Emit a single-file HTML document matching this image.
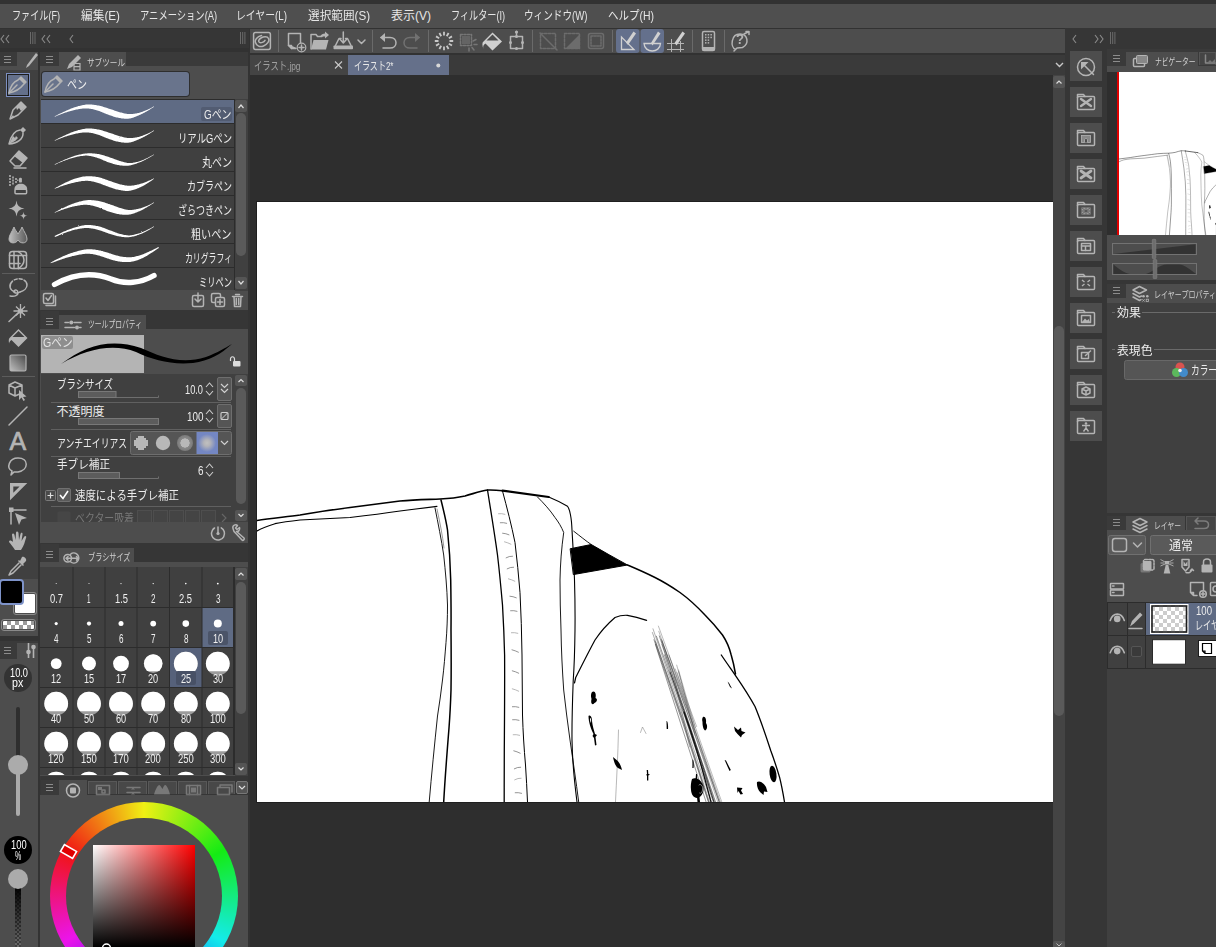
<!DOCTYPE html>
<html lang="ja"><head><meta charset="utf-8"><title>CLIP STUDIO PAINT</title>
<style>
html,body{margin:0;padding:0;background:#363636;}
body{width:1216px;height:947px;position:relative;overflow:hidden;font-family:"Liberation Sans","Noto Sans CJK JP",sans-serif;font-size:12px;color:#e2e2e2;}
.a{position:absolute;}
.t{position:absolute;white-space:nowrap;line-height:14px;transform-origin:0 0;}
svg{position:absolute;overflow:visible;}
.ic{stroke:#b4b4b4;fill:none;stroke-width:1.5;stroke-linecap:round;stroke-linejoin:round;}
.if{fill:#b4b4b4;stroke:none;}
.menu{top:9px;font-size:12px;color:#e6e6e6;}
.tab{background:#4d4d4d;}
.hd{background:#3a3a3a;}
.row{left:41px;width:193px;height:23px;background:#404040;}
.rl{right:3px;top:6px;font-size:12.5px;color:#e8e8e8;}
.sb{background:#404040;}
.sbb{background:#555;border-radius:2px;}
.sbt{background:#5a5a5a;border-radius:5px;}
.cell{position:absolute;background:#404040;}
.cl{position:absolute;left:0;right:0;text-align:center;font-size:12.5px;color:#e8e8e8;line-height:14px;}
.rb{background:#4d4d4d;}
</style></head><body>
<!-- top strip + menu bar -->
<div class="a" style="left:0;top:0;width:1216px;height:4px;background:#323232"></div>
<div class="a" style="left:0;top:4px;width:1216px;height:24px;background:#4f4f4f"></div>
<span class="t" style="left:12px;top:9.300px;font-size:12px;color:#e6e6e6;transform:scaleX(0.758)">ファイル(F)</span>
<span class="t" style="left:81px;top:9.300px;font-size:12px;color:#e6e6e6;transform:scaleX(0.975)">編集(E)</span>
<span class="t" style="left:140px;top:9.300px;font-size:12px;color:#e6e6e6;transform:scaleX(0.774)">アニメーション(A)</span>
<span class="t" style="left:236px;top:9.300px;font-size:12px;color:#e6e6e6;transform:scaleX(0.818)">レイヤー(L)</span>
<span class="t" style="left:307.5px;top:9.300px;font-size:12px;color:#e6e6e6;transform:scaleX(0.969)">選択範囲(S)</span>
<span class="t" style="left:391px;top:9.300px;font-size:12px;color:#e6e6e6;transform:scaleX(1.000)">表示(V)</span>
<span class="t" style="left:451px;top:9.300px;font-size:12px;color:#e6e6e6;transform:scaleX(0.760)">フィルター(I)</span>
<span class="t" style="left:524.4px;top:9.300px;font-size:12px;color:#e6e6e6;transform:scaleX(0.800)">ウィンドウ(W)</span>
<span class="t" style="left:608px;top:9.300px;font-size:12px;color:#e6e6e6;transform:scaleX(0.873)">ヘルプ(H)</span>
<!-- left header bar -->
<div class="a" style="left:0;top:28px;width:1216px;height:27px;background:#323232"></div>
<div class="a" style="left:0;top:29px;width:249px;height:19px;background:#363636"></div>
<!-- command bar -->
<div class="a" style="left:250px;top:29px;width:815px;height:24px;background:#4d4d4d"></div>
<!-- doc tab row -->
<div class="a" style="left:250px;top:55px;width:815px;height:20px;background:#3a3a3a"></div>
<div class="a" style="left:250px;top:55px;width:98px;height:20px;background:#444"></div>
<div class="a" style="left:348px;top:55px;width:101px;height:20px;background:#65708a"></div>
<span class="t" style="left:253.500px;top:58.500px;font-size:11.500px;color:#a0a0a0;transform:scaleX(0.723)">イラスト.jpg</span>
<span class="t" style="left:354px;top:58.500px;font-size:11.500px;color:#e8e8e8;transform:scaleX(0.697)">イラスト2*</span>
<!-- canvas area -->
<div class="a" style="left:250px;top:75px;width:803px;height:872px;background:#2e2e2e"></div>
<div class="a" style="left:257px;top:202px;width:796px;height:600px;background:#fff;box-shadow:0 0 0 1px #1f1f1f"></div>
<!-- canvas vscroll -->
<div class="a sb" style="left:1053px;top:75px;width:12px;height:872px;background:#444"></div>
<div class="a sbb" style="left:1053px;top:76px;width:12px;height:12px;"></div>
<div class="a sbt" style="left:1054px;top:326px;width:10px;height:390px;"></div>
<div class="a sbb" style="left:1053px;top:941px;width:12px;height:8px;"></div>
<!-- left header bar glyphs -->
<svg style="left:0;top:28px" width="250" height="22">
 <g stroke="#8a8a8a" stroke-width="1.1" fill="none">
  <path d="M4 7 L1 11 L4 15 M9 7 L6 11 L9 15"/>
  <path d="M30.500 4 V16 M32.800 4 V16 M35 4 V16" stroke-width="0.800" stroke="#777"/>
  <path d="M45 7 L42 11 L45 15 M50 7 L47 11 L50 15"/>
  <path d="M73 7 L70 11 L73 15"/>
  <path d="M240.500 4 V16 M242.700 4 V16 M244.900 4 V16" stroke-width="0.800" stroke="#777"/>
 </g>
</svg>
<!-- tool column -->
<div class="a" style="left:0;top:52px;width:38px;height:895px;background:#404040"></div>
<div class="a" style="left:38px;top:52px;width:2px;height:895px;background:#333"></div>
<div class="a tab" style="left:40px;top:52px;width:1px;height:895px;"></div>
<div class="a" style="left:40px;top:52px;width:1px;height:14px;background:#3a3a3a"></div>
<div class="a" style="left:40px;top:310px;width:1px;height:19px;background:#383838"></div>
<div class="a" style="left:40px;top:543px;width:1px;height:19px;background:#383838"></div>
<div class="a" style="left:40px;top:776px;width:1px;height:19px;background:#383838"></div>
<div class="a hd" style="left:0;top:52px;width:17px;height:14px;"></div>
<div class="a tab" style="left:17px;top:52px;width:21px;height:14px;"></div>
<div class="a tab" style="left:0;top:66px;width:38px;height:4px;"></div>
<svg style="left:0;top:52px" width="38" height="20">
 <path d="M4 4.5H11M4 7.5H11M4 10.5H11" stroke="#8c8c8c" stroke-width="1"/>
 <path d="M36 1 L38 3 L29 14 L26 16 L27 13 Z" class="if"/>
</svg>
<!-- selected pen tool -->
<div class="a" style="left:6px;top:73px;width:24px;height:24px;background:#64708b;box-sizing:border-box;border:1px solid #7d8fc0;"></div>
<div class="a" style="left:7px;top:74px;width:22px;height:22px;box-sizing:border-box;border:1px solid #1c1c1c;"></div>
<svg style="left:0;top:70px" width="38" height="520">
 <!-- pen nib 85 -->
 <g transform="translate(18,15)">
  <path d="M3 -8 L8 -3 L5 0 C2 4 -4 7 -9 8 C-8 3 -5 -3 0 -5 Z" class="ic" stroke-width="1.3"/>
  <path d="M-9 8 L-1 0" class="ic" stroke-width="1.2"/>
  <path d="M3 -8 L8 -3 L6 -1 L1 -6 Z" class="if"/>
 </g>
 <!-- pencil 110 -->
 <g transform="translate(18,40)">
  <path d="M3 -8 L8 -3 L0 5 L-8 9 L-5 0 Z" class="ic" stroke-width="1.3"/>
  <path d="M3 -8 L8 -3 L3 1 L1 -2 L-1 0 L-2 -3 Z" class="if"/>
  <path d="M-8 9 L-5 5 L-4 7Z" class="if"/>
 </g>
 <!-- brush 135 -->
 <g transform="translate(18,65)">
  <path d="M5 -8 L8 -5 L5 -2 L2 -5 Z" class="if"/>
  <path d="M2 -5 C-4 -4.500 -7 1 -9 9 C-1 8.500 5.500 4 5 -2" class="ic" stroke-width="1.3"/>
  <path d="M-9 9 L-5 1 L-3 3 L-2 1 L0 3 L-3 6 Z" class="if"/>
 </g>
 <!-- eraser 160 -->
 <g transform="translate(18,90)">
  <path d="M1 -9 L9 -2 L2 6 L-3 6 L-8 1 Z" class="ic" stroke-width="1.3"/>
  <path d="M1 -9 L9 -2 L5 3 L-4 -4 Z" class="if"/>
  <path d="M-4 8 H8" class="ic" stroke-width="1.3"/>
 </g>
 <!-- airbrush 185 -->
 <g transform="translate(18,115)">
  <rect x="-3" y="4.200" width="11.600" height="4.600" rx="1" class="ic" stroke-width="1.200"/>
  <path d="M-3.600 4.400 C-3.600 -3 9.200 -3 9.200 4.400 Z" class="if"/>
  <rect x="1" y="-7.200" width="2.900" height="4.800" rx="1.200" class="if"/>
  <g fill="#999"><rect x="-9" y="-10" width="2" height="2"/><rect x="-9" y="-7" width="2" height="2"/><rect x="-9" y="-4" width="2" height="2"/><rect x="-9" y="-1" width="2" height="2"/><rect x="-6" y="-8.500" width="2" height="2"/><rect x="-6" y="-5.500" width="2" height="2"/><rect x="-6" y="-2.500" width="2" height="2"/><rect x="-3" y="-7" width="2" height="2"/><rect x="-3" y="-4" width="2" height="2"/><rect x="-1" y="-5.500" width="1.500" height="1.500"/></g>
 </g>
 <!-- sparkle 210 -->
 <g transform="translate(18,140)">
  <path d="M-1.500 -9.500 Q-1 -2 6.500 -1.500 Q-1 -1 -1.500 6.500 Q-2 -1 -9.500 -1.500 Q-2 -2 -1.500 -9.500 Z" class="if" stroke="#b4b4b4" stroke-width="0.500"/>
  <path d="M5.500 1.700 Q5.700 5.500 9.500 5.700 Q5.700 5.900 5.500 9.700 Q5.300 5.900 1.500 5.700 Q5.300 5.500 5.500 1.700 Z" class="if" stroke="#b4b4b4" stroke-width="0.400"/>
 </g>
 <!-- blend 235 -->
 <g transform="translate(18,165)">
  <defs><linearGradient id="gbl" x1="0" x2="1"><stop offset="0" stop-color="#c0c0c0"/><stop offset="1" stop-color="#5a5a5a"/></linearGradient></defs>
  <path d="M-4 -8 C-6 -3 -9 0 -9 4 C-9 9 -2 9 0 5 C2 9 9 9 9 4 C9 0 6 -3 4 -8 C3 -5 1 -3 0 -1 C-1 -3 -3 -5 -4 -8 Z" fill="url(#gbl)" stroke="#b4b4b4" stroke-width="1"/>
 </g>
 <!-- frame 260 -->
 <g transform="translate(18,190)">
  <rect x="-8.500" y="-8.400" width="17" height="17" rx="3" class="ic" stroke-width="1.200"/>
  <path d="M-8.500 -4.500 H8.500 M-8.500 3.500 H2 M-4 -8.400 V8.600 M0.300 -4.500 V8.600 M0.300 -8.400 C4 -6 6 -3 6 0 C6 3.500 3.500 6.500 0.300 8.600" class="ic" stroke-width="1"/>
 </g>
 <path d="M2 203.500 H35" stroke="#5c5c5c" stroke-width="1"/>
 <!-- lasso 287 -->
 <g transform="translate(18,217)">
  <path d="M-3 5 C-9 3 -10 -3 -4 -7 C2 -10 9 -7 9 -2 C9 1 6 4 2 5" class="ic" stroke-width="1.200" stroke-dasharray="14 2 3 2 3 2 30"/>
  <path d="M2 5 C-1 7 -5 6 -4 4 C-3 2 0 3 0 6 C0 8 -3 10 -8 9" class="ic" stroke-width="1.200"/>
 </g>
 <!-- wand 312 -->
 <g transform="translate(18,242)">
  <path d="M-9 9.500 L0.500 0.500" class="ic" stroke-width="1.300"/>
  <path d="M2.500 -8 V6 M-4.500 -1 H9.500 M-2 -5.500 L7 3.500 M7 -5.500 L-2 3.500" stroke="#b4b4b4" stroke-width="1.300" fill="none"/>
  <circle cx="2.500" cy="-1" r="2.600" class="if"/>
 </g>
 <!-- fill 337 -->
 <g transform="translate(18.500,268)">
  <path d="M0 -9 L9 0 L0 9 L-7 2 C-9 3 -10 5 -9 7 C-10 4 -10 1 -9 0 Z" class="if"/>
  <path d="M0 -7 L6 -1 L-6 -1 Z" fill="#404040"/>
 </g>
 <!-- gradient 362 -->
 <g transform="translate(18,293)">
  <defs><linearGradient id="ggr" x1="0" y1="1" x2="1" y2="0"><stop offset="0" stop-color="#c0c0c0"/><stop offset="1" stop-color="#484848"/></linearGradient></defs>
  <rect x="-8" y="-8" width="16" height="16" rx="1.500" fill="url(#ggr)" stroke="#b4b4b4" stroke-width="1.200"/>
 </g>
 <path d="M2 306.500 H35" stroke="#5c5c5c" stroke-width="1"/>
 <!-- 3D 390 -->
 <g transform="translate(18,320)">
  <path d="M-3 -8 L4 -5 L4 3 L-3 6 L-9 3 L-9 -5 Z M-9 -5 L-3 -2 L4 -5 M-3 -2 V6" class="ic" stroke-width="1.100"/>
  <path d="M1 0 L1 10 L3.500 7.500 L5.500 11 L7 10 L5 7 L8.500 6.500 Z" class="if" stroke="#404040" stroke-width="0.600"/>
 </g>
 <!-- line 415 -->
 <path d="M9 355 L27 337" class="ic" stroke-width="1.300"/>
 <!-- balloon 466 -->
 <g transform="translate(18,396)">
  <path d="M-6 5 C-12 2 -9 -8 0 -8 C11 -8 11 4 0 6 C-2 6 -3 6 -4 6 L-7 9 Z" class="ic" stroke-width="1.200"/>
 </g>
 <!-- ruler triangle 491 -->
 <path d="M10 413 H27.300 L10 430.300 Z M13.300 416.400 V422.700 L19.600 416.400 Z" fill="#b4b4b4" fill-rule="evenodd"/>
 <!-- operation 516 -->
 <g transform="translate(18,446)">
  <path d="M-7 -6 V8 M-7 -6 H8" class="ic" stroke-width="1.200"/>
  <rect x="-9" y="-8.500" width="4.500" height="4.500" class="if"/>
  <path d="M-3 -3 L9 2 L3.500 3.500 L1 9 Z" class="if"/>
 </g>
 <!-- hand 541 -->
 <g transform="translate(18,471)">
  <path d="M-3 9 C-5 6 -7 3 -9 1 C-9 -1 -7 -1 -5 1 L-6 -6 C-6 -8 -4 -8 -3.500 -6 L-2.500 -1 L-2 -8 C-2 -10 0 -10 0.500 -8 L1 -1 L2.500 -7 C3 -9 5 -8.500 4.500 -6.500 L3.500 0 L6 -4 C7 -6 9 -5 8 -3 C7 0 6 5 3 9 Z" class="if"/>
 </g>
 <!-- eyedropper 566 -->
 <g transform="translate(18,496)">
  <path d="M4 -9 C6 -10 9 -7 8 -5 L5 -2 L6 -1 L5 0 L0 -5 L1 -6 L2 -5 Z" class="if"/>
  <path d="M1 -3 L-7 5 L-9 9 L-5 7 L3 -1" class="ic" stroke-width="1.200"/>
 </g>
</svg>
<span class="t" style="left:9.500px;top:428px;font-size:25px;line-height:27px;color:#b4b4b4;-webkit-text-stroke:0.7px #b4b4b4;font-family:'Liberation Sans',sans-serif;">A</span>
<!-- colour swatches -->
<div class="a tab" style="left:0;top:579px;width:38px;height:57px;"></div>
<div class="a" style="left:14px;top:593px;width:22px;height:21px;background:#fff;box-sizing:border-box;border:1px solid #4d4d4d;outline:1px solid #8a8a8a;border-radius:2px;"></div>
<div class="a" style="left:-1px;top:579px;width:25px;height:26px;background:#000;box-sizing:border-box;border:2px solid #7e93c9;border-radius:4px;"></div>
<div class="a" style="left:1px;top:619px;width:35px;height:12px;box-sizing:border-box;border:1px solid #8a8a8a;border-radius:3px;"></div>
<svg style="left:3px;top:621px" width="31" height="8"><rect width="31" height="8" fill="#fff" rx="1"/><g fill="#9a9a9a"><rect x="0" y="4" width="4" height="4"/><rect x="4" y="0" width="4" height="4"/><rect x="8" y="4" width="4" height="4"/><rect x="12" y="0" width="4" height="4"/><rect x="16" y="4" width="4" height="4"/><rect x="20" y="0" width="4" height="4"/><rect x="24" y="4" width="4" height="4"/><rect x="28" y="0" width="3" height="4"/></g></svg>
<!-- brush size mini panel -->
<div class="a" style="left:0;top:636px;width:38px;height:5px;background:#333"></div>
<div class="a hd" style="left:0;top:641px;width:38px;height:18px;"></div>
<div class="a tab" style="left:17px;top:643px;width:21px;height:16px;"></div>
<div class="a tab" style="left:0;top:659px;width:38px;height:288px;"></div>
<svg style="left:0;top:641px" width="38" height="20">
 <path d="M4 6.5H11M4 9.5H11M4 12.5H11" stroke="#8c8c8c" stroke-width="1"/>
 <path d="M28.500 2 V17 M33.500 4 V17" stroke="#b4b4b4" stroke-width="1.600"/>
 <circle cx="28.500" cy="11" r="2.300" class="if"/><circle cx="33.500" cy="6" r="2.300" class="if"/>
</svg>
<div class="a" style="left:4px;top:663.700px;width:28.200px;height:28.200px;border-radius:14.100px;background:#333"></div>
<span class="t" style="left:9.500px;top:665.600px;font-size:12.500px;color:#ffffff;transform:scaleX(0.739)">10.0</span>
<span class="t" style="left:11.900px;top:676.400px;font-size:12.500px;color:#ffffff;transform:scaleX(0.856)">px</span>
<div class="a" style="left:16px;top:707px;width:4px;height:58px;background:#2e2e2e;border-radius:2px"></div>
<div class="a" style="left:16px;top:765px;width:4px;height:51px;background:#ababab;border-radius:2px"></div>
<div class="a" style="left:8px;top:755px;width:20px;height:20px;border-radius:10px;background:#ababab"></div>
<div class="a" style="left:4px;top:835.800px;width:28.200px;height:28.200px;border-radius:14.100px;background:#000"></div>
<span class="t" style="left:10.800px;top:837.700px;font-size:12.500px;color:#ffffff;transform:scaleX(0.748)">100</span>
<span class="t" style="left:14.800px;top:848.800px;font-size:12.500px;color:#ffffff;transform:scaleX(0.566)">%</span>
<svg style="left:15px;top:885px" width="6" height="62"><defs><pattern id="ck" width="4" height="4" patternUnits="userSpaceOnUse"><rect width="4" height="4" fill="#6a6a6a"/><rect width="2" height="2" fill="#404040"/><rect x="2" y="2" width="2" height="2" fill="#404040"/></pattern><linearGradient id="ckg" x1="0" y1="0" x2="0" y2="1"><stop offset="0" stop-color="#000" stop-opacity="1"/><stop offset="1" stop-color="#000" stop-opacity="0"/></linearGradient></defs><rect width="6" height="62" fill="url(#ck)"/><rect width="6" height="62" fill="url(#ckg)"/></svg>
<div class="a" style="left:8px;top:869px;width:20px;height:20px;border-radius:10px;background:#ababab"></div>
<!-- sub tool panel -->
<div class="a tab" style="left:41px;top:52px;width:207px;height:258px;"></div>
<div class="a" style="left:248px;top:52px;width:2px;height:895px;background:#333"></div>
<div class="a hd" style="left:41px;top:52px;width:207px;height:14px;"></div>
<div class="a tab" style="left:59px;top:52px;width:67px;height:14px;"></div>
<svg style="left:41px;top:52px" width="90" height="20"><path d="M5 4.5H12M5 7.5H12M5 10.5H12" stroke="#8c8c8c" stroke-width="1"/><path d="M37 3 L40 6 L31 15 L26 17 L28 12 Z" class="if"/><path d="M33 11.500 H39 V18 H33 Z M33 14.700 H39" fill="none" stroke="#b4b4b4" stroke-width="1.200"/></svg>
<span class="t" style="left:87px;top:55.900px;font-size:9.500px;color:#d0d0d0;transform:scaleX(0.800)">サブツール</span>
<div class="a" style="left:42px;top:72px;width:147px;height:24px;background:#69748c;border-radius:3px;box-shadow:0 0 0 1px #2e2e2e;"></div>
<svg style="left:42px;top:72px" width="30" height="24"><g transform="translate(12,12)"><path d="M3 -8 L8 -3 L5 0 C2 4 -4 7 -9 8 C-8 3 -5 -3 0 -5 Z" class="ic" stroke-width="1.300"/><path d="M-9 8 L-1 0" class="ic" stroke-width="1.200"/><path d="M3 -8 L8 -3 L6 -1 L1 -6 Z" class="if"/></g></svg>
<span class="t" style="left:67px;top:78px;font-size:12px;color:#f0f0f0;transform:scaleX(0.833)">ペン</span>
<div class="a" style="left:41px;top:99px;width:194px;height:191px;background:#2c2c2c"></div>
<div class="a row" style="top:100px;height:23px;background:#5f6b84">
<div class="a" style="left:160px;top:7px;width:31px;height:14px;background:#525c72;border-radius:2px"></div>
</div>
<span class="t" style="left:204.0px;top:108.3px;font-size:12px;color:#ececec;transform:scaleX(0.825)">Gペン</span>
<div class="a row" style="top:124px;height:23px;background:#404040">
</div>
<span class="t" style="left:177.5px;top:132.3px;font-size:12px;color:#ececec;transform:scaleX(0.780)">リアルGペン</span>
<div class="a row" style="top:148px;height:23px;background:#404040">
</div>
<span class="t" style="left:201.5px;top:156.3px;font-size:12px;color:#ececec;transform:scaleX(0.833)">丸ペン</span>
<div class="a row" style="top:172px;height:23px;background:#404040">
</div>
<span class="t" style="left:186.5px;top:180.3px;font-size:12px;color:#ececec;transform:scaleX(0.750)">カブラペン</span>
<div class="a row" style="top:196px;height:23px;background:#404040">
</div>
<span class="t" style="left:177.5px;top:204.3px;font-size:12px;color:#ececec;transform:scaleX(0.750)">ざらつきペン</span>
<div class="a row" style="top:220px;height:23px;background:#404040">
</div>
<span class="t" style="left:191.0px;top:228.3px;font-size:12px;color:#ececec;transform:scaleX(0.843)">粗いペン</span>
<div class="a row" style="top:244px;height:23px;background:#404040">
</div>
<span class="t" style="left:184.5px;top:252.3px;font-size:12px;color:#ececec;transform:scaleX(0.655)">カリグラフィ</span>
<div class="a row" style="top:268px;height:22px;background:#404040">
</div>
<span class="t" style="left:198.5px;top:276.3px;font-size:12px;color:#ececec;transform:scaleX(0.687)">ミリペン</span>
<svg style="left:41px;top:100px" width="193" height="190"><defs><filter id="rough" x="-5%" y="-20%" width="110%" height="140%"><feTurbulence type="fractalNoise" baseFrequency="0.7" numOctaves="2" seed="4" result="n"/><feDisplacementMap in="SourceGraphic" in2="n" scale="1.6" xChannelSelector="R" yChannelSelector="G"/></filter></defs>
<path d="M13.9 16.7L14.4 16.5L15.0 16.2L15.7 15.9L16.5 15.6L17.4 15.2L18.4 14.8L19.4 14.4L20.4 14.1L21.4 13.7L22.4 13.3L23.3 13.0L24.3 12.6L25.2 12.4L26.1 12.1L27.0 11.8L27.9 11.5L28.9 11.2L29.8 11.0L30.7 10.7L31.7 10.5L32.6 10.2L33.5 10.0L34.4 9.8L35.3 9.6L36.3 9.5L37.2 9.3L38.1 9.1L39.0 9.0L39.9 8.8L40.8 8.7L41.7 8.6L42.6 8.5L43.4 8.5L44.3 8.4L45.2 8.4L46.0 8.5L46.9 8.5L47.7 8.6L48.6 8.7L49.5 8.8L50.3 9.0L51.2 9.1L52.0 9.3L52.9 9.5L53.8 9.7L54.6 10.0L55.5 10.2L56.4 10.5L57.2 10.7L58.1 11.0L58.9 11.3L59.8 11.7L60.7 12.0L61.6 12.4L62.5 12.8L63.4 13.2L64.3 13.6L65.2 13.9L66.1 14.3L67.0 14.6L67.9 14.9L68.7 15.2L69.6 15.5L70.4 15.8L71.3 16.1L72.1 16.4L73.0 16.7L73.8 16.9L74.7 17.2L75.6 17.4L76.5 17.6L77.4 17.8L78.2 18.0L79.1 18.1L79.9 18.3L80.8 18.4L81.7 18.5L82.6 18.6L83.5 18.7L84.4 18.7L85.3 18.8L86.3 18.7L87.2 18.7L88.1 18.6L89.1 18.5L90.0 18.3L90.9 18.0L91.8 17.7L92.7 17.4L93.5 17.1L94.4 16.8L95.2 16.4L96.0 16.1L96.8 15.7L97.6 15.4L98.4 15.1L99.1 14.8L99.8 14.4L100.5 14.1L101.2 13.8L101.9 13.4L102.5 13.1L103.2 12.7L103.8 12.4L104.4 12.1L105.0 11.7L105.6 11.4L106.3 11.0L106.9 10.7L107.5 10.3L108.2 9.9L108.9 9.4L109.5 9.0L110.2 8.6L110.8 8.2L111.4 7.9L111.9 7.5L112.4 7.2L112.8 7.0L113.1 6.8L112.9 6.4L112.6 6.6L112.1 6.8L111.6 7.1L111.1 7.4L110.5 7.7L109.8 8.0L109.2 8.4L108.5 8.7L107.8 9.1L107.1 9.4L106.4 9.7L105.7 10.0L105.1 10.3L104.5 10.5L103.8 10.8L103.2 11.1L102.5 11.3L101.8 11.6L101.2 11.9L100.5 12.1L99.8 12.3L99.1 12.5L98.4 12.7L97.6 12.9L96.9 13.1L96.1 13.2L95.2 13.4L94.4 13.5L93.5 13.7L92.7 13.8L91.9 13.9L91.0 13.9L90.2 14.0L89.4 14.0L88.6 14.0L87.9 14.0L87.1 14.0L86.4 13.9L85.7 13.8L84.9 13.7L84.2 13.5L83.4 13.4L82.6 13.2L81.8 13.0L81.1 12.8L80.3 12.6L79.4 12.4L78.6 12.2L77.9 12.0L77.1 11.8L76.4 11.5L75.6 11.3L74.8 11.0L74.0 10.7L73.2 10.4L72.4 10.1L71.6 9.8L70.7 9.5L69.8 9.3L69.0 9.0L68.1 8.7L67.2 8.4L66.3 8.1L65.4 7.8L64.5 7.5L63.5 7.2L62.6 6.9L61.6 6.6L60.6 6.3L59.6 6.0L58.6 5.8L57.6 5.5L56.6 5.4L55.7 5.2L54.7 5.0L53.8 4.9L52.8 4.8L51.8 4.7L50.9 4.6L49.9 4.5L48.9 4.5L47.9 4.5L47.0 4.5L46.0 4.5L45.0 4.6L44.0 4.7L43.1 4.9L42.1 5.0L41.1 5.2L40.2 5.4L39.3 5.7L38.3 5.9L37.4 6.1L36.5 6.4L35.6 6.7L34.7 7.0L33.7 7.3L32.8 7.6L31.9 7.9L31.0 8.3L30.0 8.6L29.1 9.0L28.2 9.4L27.3 9.8L26.4 10.2L25.5 10.6L24.6 11.0L23.7 11.4L22.8 11.8L21.9 12.2L20.9 12.7L20.0 13.2L19.0 13.6L18.1 14.1L17.1 14.6L16.3 15.0L15.5 15.4L14.8 15.8L14.2 16.1L13.7 16.3Z" fill="#fff"/>
<path d="M13.9 40.7L14.4 40.5L15.0 40.2L15.7 39.9L16.5 39.6L17.4 39.2L18.4 38.8L19.4 38.4L20.4 38.1L21.4 37.7L22.4 37.3L23.3 37.0L24.3 36.6L25.2 36.4L26.1 36.1L27.0 35.8L27.9 35.5L28.9 35.2L29.8 35.0L30.7 34.7L31.7 34.5L32.6 34.2L33.5 34.0L34.4 33.8L35.3 33.6L36.3 33.5L37.2 33.3L38.1 33.1L39.0 33.0L39.9 32.8L40.8 32.7L41.7 32.6L42.6 32.5L43.4 32.5L44.3 32.4L45.2 32.4L46.0 32.5L46.9 32.5L47.7 32.6L48.6 32.7L49.5 32.8L50.3 33.0L51.2 33.1L52.0 33.3L52.9 33.5L53.8 33.7L54.6 34.0L55.5 34.2L56.4 34.5L57.2 34.7L58.1 35.0L58.9 35.3L59.8 35.7L60.7 36.0L61.6 36.4L62.5 36.8L63.4 37.2L64.3 37.6L65.2 37.9L66.1 38.3L67.0 38.6L67.9 38.9L68.7 39.2L69.6 39.5L70.4 39.8L71.3 40.1L72.1 40.4L73.0 40.7L73.8 40.9L74.7 41.2L75.6 41.4L76.5 41.6L77.4 41.8L78.2 42.0L79.1 42.1L79.9 42.3L80.8 42.4L81.7 42.5L82.6 42.6L83.5 42.7L84.4 42.7L85.3 42.8L86.3 42.7L87.2 42.7L88.1 42.6L89.1 42.5L90.0 42.3L90.9 42.0L91.8 41.7L92.7 41.4L93.5 41.1L94.4 40.8L95.2 40.4L96.0 40.1L96.8 39.7L97.6 39.4L98.4 39.1L99.1 38.8L99.8 38.4L100.5 38.1L101.2 37.8L101.9 37.4L102.5 37.1L103.2 36.7L103.8 36.4L104.4 36.1L105.0 35.7L105.6 35.4L106.3 35.0L106.9 34.7L107.5 34.3L108.2 33.9L108.9 33.4L109.5 33.0L110.2 32.6L110.8 32.2L111.4 31.9L111.9 31.5L112.4 31.2L112.8 31.0L113.1 30.8L112.9 30.4L112.6 30.6L112.1 30.8L111.6 31.1L111.1 31.4L110.5 31.7L109.8 32.0L109.2 32.4L108.5 32.7L107.8 33.1L107.1 33.4L106.4 33.7L105.7 34.0L105.1 34.3L104.5 34.5L103.8 34.8L103.2 35.1L102.5 35.3L101.8 35.6L101.2 35.9L100.5 36.1L99.8 36.3L99.1 36.5L98.4 36.7L97.6 36.9L96.9 37.1L96.1 37.2L95.2 37.4L94.4 37.5L93.5 37.7L92.7 37.8L91.9 37.9L91.0 37.9L90.2 38.0L89.4 38.0L88.6 38.0L87.9 38.0L87.1 38.0L86.4 37.9L85.7 37.8L84.9 37.7L84.2 37.5L83.4 37.4L82.6 37.2L81.8 37.0L81.1 36.8L80.3 36.6L79.4 36.4L78.6 36.2L77.9 36.0L77.1 35.8L76.4 35.5L75.6 35.3L74.8 35.0L74.0 34.7L73.2 34.4L72.4 34.1L71.6 33.8L70.7 33.5L69.8 33.3L69.0 33.0L68.1 32.7L67.2 32.4L66.3 32.1L65.4 31.8L64.5 31.5L63.5 31.2L62.6 30.9L61.6 30.6L60.6 30.3L59.6 30.0L58.6 29.8L57.6 29.5L56.6 29.4L55.7 29.2L54.7 29.0L53.8 28.9L52.8 28.8L51.8 28.7L50.9 28.6L49.9 28.5L48.9 28.5L47.9 28.5L47.0 28.5L46.0 28.5L45.0 28.6L44.0 28.7L43.1 28.9L42.1 29.0L41.1 29.2L40.2 29.4L39.3 29.7L38.3 29.9L37.4 30.1L36.5 30.4L35.6 30.7L34.7 31.0L33.7 31.3L32.8 31.6L31.9 31.9L31.0 32.3L30.0 32.6L29.1 33.0L28.2 33.4L27.3 33.8L26.4 34.2L25.5 34.6L24.6 35.0L23.7 35.4L22.8 35.8L21.9 36.2L20.9 36.7L20.0 37.2L19.0 37.6L18.1 38.1L17.1 38.6L16.3 39.0L15.5 39.4L14.8 39.8L14.2 40.1L13.7 40.3Z" fill="#fff" filter="url(#rough)"/>
<path d="M13.9 64.7L14.4 64.4L15.0 64.2L15.7 63.9L16.5 63.5L17.4 63.1L18.3 62.7L19.3 62.3L20.3 61.9L21.3 61.5L22.3 61.1L23.2 60.7L24.1 60.4L25.0 60.1L25.9 59.7L26.9 59.4L27.8 59.1L28.7 58.8L29.6 58.5L30.6 58.2L31.5 58.0L32.4 57.7L33.3 57.5L34.3 57.2L35.2 57.0L36.1 56.8L37.0 56.6L37.9 56.5L38.8 56.3L39.8 56.1L40.7 56.0L41.6 55.9L42.5 55.8L43.4 55.7L44.3 55.6L45.1 55.6L46.0 55.6L46.9 55.7L47.8 55.8L48.7 55.9L49.5 56.1L50.4 56.2L51.3 56.4L52.1 56.6L53.0 56.9L53.9 57.1L54.8 57.4L55.7 57.6L56.5 57.9L57.4 58.2L58.2 58.5L59.1 58.8L60.0 59.2L60.9 59.6L61.8 60.0L62.6 60.4L63.6 60.8L64.5 61.1L65.4 61.5L66.3 61.9L67.2 62.2L68.0 62.5L68.9 62.8L69.7 63.1L70.6 63.3L71.4 63.6L72.3 63.9L73.1 64.1L74.0 64.4L74.9 64.6L75.7 64.8L76.6 65.0L77.5 65.1L78.4 65.3L79.2 65.4L80.1 65.5L81.0 65.6L81.9 65.7L82.7 65.7L83.6 65.8L84.5 65.8L85.4 65.8L86.3 65.7L87.2 65.7L88.1 65.6L89.0 65.4L89.8 65.3L90.7 65.1L91.6 64.8L92.5 64.6L93.3 64.3L94.2 64.0L95.0 63.7L95.8 63.4L96.6 63.1L97.4 62.8L98.2 62.5L98.9 62.3L99.6 62.0L100.3 61.7L101.0 61.4L101.7 61.1L102.4 60.7L103.0 60.4L103.7 60.1L104.3 59.8L104.9 59.5L105.5 59.1L106.2 58.8L106.8 58.5L107.5 58.1L108.1 57.7L108.8 57.3L109.5 56.9L110.1 56.5L110.7 56.2L111.3 55.8L111.9 55.5L112.3 55.2L112.8 54.9L113.1 54.8L112.9 54.4L112.6 54.6L112.2 54.9L111.7 55.1L111.1 55.4L110.5 55.8L109.9 56.1L109.2 56.5L108.5 56.8L107.8 57.2L107.2 57.6L106.5 57.9L105.8 58.2L105.2 58.5L104.6 58.8L103.9 59.1L103.3 59.4L102.7 59.7L102.0 60.0L101.3 60.2L100.7 60.5L100.0 60.8L99.3 61.0L98.6 61.2L97.8 61.5L97.0 61.7L96.3 61.9L95.4 62.1L94.6 62.3L93.8 62.4L92.9 62.6L92.1 62.7L91.2 62.9L90.4 63.0L89.5 63.0L88.7 63.0L87.9 63.0L87.2 63.0L86.4 62.9L85.6 62.8L84.8 62.6L84.0 62.5L83.3 62.3L82.5 62.1L81.7 61.8L80.9 61.6L80.1 61.4L79.3 61.1L78.5 60.9L77.7 60.6L77.0 60.4L76.2 60.1L75.4 59.8L74.6 59.5L73.9 59.2L73.1 58.9L72.2 58.6L71.4 58.3L70.6 58.0L69.7 57.7L68.8 57.4L68.0 57.1L67.1 56.8L66.2 56.5L65.3 56.2L64.3 55.9L63.4 55.6L62.4 55.3L61.4 55.0L60.4 54.8L59.4 54.5L58.5 54.3L57.5 54.1L56.5 53.9L55.6 53.8L54.6 53.7L53.6 53.5L52.7 53.5L51.7 53.4L50.8 53.3L49.8 53.3L48.8 53.3L47.9 53.3L46.9 53.3L46.0 53.4L45.0 53.4L44.1 53.5L43.1 53.7L42.2 53.8L41.3 54.0L40.3 54.2L39.4 54.4L38.5 54.6L37.6 54.8L36.6 55.1L35.7 55.3L34.8 55.6L33.9 55.8L33.0 56.1L32.0 56.4L31.1 56.8L30.2 57.1L29.3 57.4L28.3 57.8L27.4 58.2L26.5 58.5L25.6 58.9L24.7 59.3L23.9 59.6L22.9 60.0L22.0 60.4L21.0 60.9L20.0 61.3L19.1 61.8L18.1 62.2L17.2 62.7L16.3 63.1L15.5 63.5L14.8 63.8L14.2 64.1L13.7 64.3Z" fill="#fff"/>
<path d="M13.9 88.7L14.4 88.5L15.0 88.3L15.8 88.0L16.6 87.7L17.5 87.4L18.5 87.0L19.4 86.6L20.5 86.3L21.5 85.9L22.5 85.6L23.5 85.3L24.4 85.0L25.3 84.7L26.2 84.4L27.1 84.1L28.1 83.9L29.0 83.6L29.9 83.4L30.9 83.1L31.8 82.9L32.7 82.7L33.6 82.5L34.5 82.3L35.5 82.1L36.4 81.9L37.3 81.7L38.2 81.6L39.1 81.4L40.0 81.3L40.9 81.1L41.7 81.0L42.6 80.9L43.5 80.9L44.3 80.8L45.2 80.8L46.0 80.8L46.9 80.8L47.7 80.9L48.6 81.0L49.4 81.1L50.3 81.3L51.1 81.4L52.0 81.6L52.9 81.8L53.7 82.0L54.6 82.2L55.5 82.4L56.3 82.7L57.2 82.9L58.0 83.2L58.9 83.5L59.8 83.8L60.6 84.2L61.5 84.5L62.4 84.9L63.4 85.2L64.3 85.6L65.2 86.0L66.1 86.3L67.0 86.6L67.9 86.9L68.7 87.2L69.6 87.5L70.4 87.8L71.3 88.1L72.1 88.4L73.0 88.6L73.8 88.9L74.7 89.2L75.6 89.4L76.5 89.6L77.4 89.8L78.2 90.0L79.1 90.1L79.9 90.3L80.8 90.5L81.7 90.6L82.6 90.7L83.5 90.8L84.4 90.9L85.3 90.9L86.3 90.9L87.2 90.9L88.1 90.8L89.1 90.7L90.0 90.5L90.9 90.3L91.9 90.1L92.8 89.8L93.7 89.5L94.5 89.2L95.4 88.9L96.2 88.6L97.0 88.3L97.8 88.0L98.5 87.6L99.3 87.3L100.0 87.0L100.7 86.6L101.4 86.3L102.1 85.9L102.7 85.5L103.4 85.2L104.0 84.8L104.6 84.4L105.2 84.1L105.8 83.7L106.4 83.3L107.0 82.9L107.7 82.5L108.3 82.1L109.0 81.7L109.6 81.2L110.3 80.8L110.9 80.4L111.4 80.0L111.9 79.6L112.4 79.3L112.8 79.0L113.1 78.8L112.9 78.4L112.5 78.6L112.1 78.8L111.6 79.0L111.0 79.3L110.4 79.6L109.7 79.9L109.1 80.2L108.3 80.5L107.6 80.8L106.9 81.1L106.2 81.4L105.6 81.7L104.9 81.9L104.3 82.2L103.6 82.4L103.0 82.7L102.3 82.9L101.6 83.2L101.0 83.4L100.3 83.6L99.6 83.8L98.9 84.0L98.2 84.2L97.5 84.4L96.7 84.5L95.9 84.7L95.1 84.9L94.3 85.1L93.4 85.2L92.6 85.4L91.8 85.5L91.0 85.6L90.1 85.7L89.4 85.7L88.6 85.8L87.9 85.8L87.1 85.7L86.4 85.7L85.7 85.6L84.9 85.5L84.2 85.4L83.4 85.3L82.6 85.1L81.9 85.0L81.1 84.8L80.3 84.6L79.4 84.4L78.6 84.2L77.9 84.0L77.1 83.8L76.4 83.5L75.6 83.3L74.8 83.0L74.0 82.7L73.2 82.5L72.4 82.2L71.6 81.9L70.7 81.6L69.8 81.3L69.0 81.0L68.1 80.7L67.2 80.4L66.4 80.1L65.5 79.7L64.5 79.4L63.6 79.1L62.6 78.7L61.6 78.4L60.7 78.1L59.7 77.8L58.7 77.5L57.7 77.3L56.7 77.1L55.7 76.9L54.8 76.8L53.8 76.6L52.8 76.5L51.9 76.4L50.9 76.3L49.9 76.2L48.9 76.2L47.9 76.2L47.0 76.2L46.0 76.2L45.0 76.3L44.0 76.4L43.0 76.5L42.0 76.6L41.1 76.8L40.1 77.0L39.2 77.2L38.2 77.5L37.3 77.7L36.4 78.0L35.5 78.2L34.5 78.5L33.6 78.8L32.7 79.1L31.7 79.5L30.8 79.8L29.9 80.2L29.0 80.6L28.1 81.0L27.2 81.4L26.3 81.8L25.4 82.2L24.5 82.6L23.6 83.0L22.7 83.5L21.8 83.9L20.8 84.4L19.9 84.9L18.9 85.4L18.0 86.0L17.1 86.4L16.2 86.9L15.5 87.3L14.8 87.7L14.2 88.0L13.7 88.3Z" fill="#fff"/>
<path d="M13.9 112.7L14.4 112.5L15.0 112.2L15.7 111.9L16.6 111.6L17.4 111.3L18.4 110.9L19.4 110.5L20.4 110.1L21.4 109.7L22.4 109.4L23.4 109.1L24.3 108.7L25.2 108.5L26.1 108.2L27.0 107.9L28.0 107.6L28.9 107.4L29.8 107.1L30.8 106.9L31.7 106.6L32.6 106.4L33.6 106.2L34.5 106.0L35.4 105.9L36.3 105.7L37.2 105.5L38.1 105.4L39.1 105.2L40.0 105.1L40.8 105.0L41.7 104.9L42.6 104.8L43.5 104.8L44.3 104.8L45.2 104.8L46.0 104.8L46.9 104.9L47.7 105.0L48.6 105.1L49.4 105.2L50.3 105.4L51.1 105.6L52.0 105.8L52.8 106.0L53.7 106.3L54.5 106.5L55.4 106.8L56.3 107.0L57.1 107.3L57.9 107.6L58.8 107.9L59.6 108.2L60.5 108.6L61.4 109.0L62.3 109.4L63.2 109.7L64.1 110.1L65.0 110.5L65.9 110.9L66.8 111.2L67.7 111.5L68.6 111.8L69.4 112.0L70.2 112.3L71.1 112.6L71.9 112.8L72.8 113.1L73.7 113.3L74.6 113.6L75.5 113.8L76.4 114.0L77.3 114.1L78.2 114.3L79.0 114.4L79.9 114.5L80.8 114.6L81.7 114.7L82.6 114.8L83.5 114.8L84.4 114.8L85.3 114.8L86.3 114.8L87.2 114.7L88.1 114.6L89.1 114.4L90.0 114.2L90.9 114.0L91.8 113.8L92.7 113.5L93.6 113.2L94.4 112.8L95.3 112.5L96.1 112.2L96.9 111.8L97.6 111.5L98.4 111.2L99.1 110.9L99.9 110.5L100.6 110.2L101.2 109.9L101.9 109.5L102.6 109.2L103.2 108.8L103.8 108.4L104.4 108.1L105.0 107.7L105.7 107.4L106.3 107.0L106.9 106.6L107.5 106.3L108.2 105.9L108.9 105.4L109.5 105.0L110.2 104.6L110.8 104.2L111.4 103.9L111.9 103.5L112.4 103.2L112.8 103.0L113.1 102.8L112.9 102.4L112.6 102.6L112.1 102.8L111.6 103.1L111.1 103.4L110.5 103.7L109.8 104.0L109.2 104.4L108.5 104.7L107.8 105.1L107.1 105.4L106.4 105.7L105.7 106.0L105.1 106.3L104.5 106.5L103.8 106.8L103.1 107.0L102.5 107.3L101.8 107.5L101.1 107.8L100.5 108.0L99.8 108.2L99.1 108.4L98.3 108.6L97.6 108.8L96.8 109.0L96.0 109.1L95.2 109.3L94.4 109.5L93.5 109.6L92.7 109.7L91.9 109.8L91.0 109.9L90.2 110.0L89.4 110.0L88.6 110.0L87.9 110.0L87.1 109.9L86.4 109.8L85.7 109.7L84.9 109.6L84.2 109.4L83.4 109.2L82.7 109.0L81.9 108.8L81.1 108.6L80.3 108.3L79.5 108.1L78.7 107.9L78.0 107.6L77.2 107.4L76.5 107.1L75.7 106.8L75.0 106.6L74.2 106.3L73.4 106.0L72.6 105.6L71.7 105.3L70.9 105.0L70.0 104.7L69.2 104.4L68.3 104.1L67.4 103.9L66.6 103.5L65.6 103.2L64.7 102.9L63.8 102.6L62.8 102.3L61.8 102.0L60.8 101.7L59.8 101.4L58.8 101.2L57.7 101.0L56.8 100.8L55.8 100.7L54.8 100.5L53.9 100.4L52.9 100.3L51.9 100.2L50.9 100.2L49.9 100.1L48.9 100.1L47.9 100.1L47.0 100.1L46.0 100.2L45.0 100.3L44.0 100.4L43.0 100.6L42.1 100.7L41.1 100.9L40.2 101.2L39.2 101.4L38.3 101.6L37.4 101.9L36.4 102.2L35.5 102.4L34.6 102.7L33.7 103.0L32.7 103.4L31.8 103.7L30.9 104.1L30.0 104.5L29.1 104.8L28.1 105.2L27.2 105.6L26.3 106.0L25.5 106.4L24.6 106.8L23.7 107.3L22.8 107.7L21.9 108.1L20.9 108.6L19.9 109.1L19.0 109.6L18.0 110.1L17.1 110.6L16.3 111.0L15.5 111.4L14.8 111.8L14.2 112.1L13.7 112.3Z" fill="#fff" filter="url(#rough)"/>
<path d="M14.0 137.0L14.5 136.8L15.2 136.5L15.9 136.2L16.7 135.9L17.6 135.5L18.5 135.1L19.5 134.7L20.4 134.3L21.4 133.8L22.4 133.5L23.4 133.1L24.3 132.7L25.2 132.4L26.1 132.1L27.0 131.8L27.9 131.5L28.8 131.2L29.8 130.9L30.7 130.6L31.6 130.3L32.5 130.1L33.5 129.8L34.4 129.6L35.3 129.4L36.2 129.2L37.1 129.0L38.0 128.8L38.9 128.7L39.8 128.5L40.7 128.4L41.6 128.3L42.5 128.2L43.4 128.1L44.3 128.0L45.2 128.0L46.0 128.0L46.9 128.0L47.8 128.1L48.6 128.2L49.5 128.3L50.4 128.4L51.3 128.5L52.1 128.7L53.0 128.8L53.9 129.0L54.8 129.2L55.7 129.5L56.6 129.7L57.5 129.9L58.3 130.2L59.2 130.5L60.1 130.8L61.0 131.1L61.9 131.4L62.9 131.8L63.8 132.1L64.7 132.5L65.6 132.8L66.5 133.1L67.4 133.4L68.3 133.7L69.2 134.0L70.0 134.3L70.9 134.5L71.7 134.8L72.6 135.1L73.4 135.3L74.2 135.5L75.1 135.8L76.0 136.0L76.8 136.2L77.7 136.3L78.5 136.5L79.4 136.6L80.2 136.8L81.1 136.9L82.0 137.0L82.8 137.1L83.7 137.2L84.6 137.3L85.4 137.3L86.3 137.3L87.2 137.3L88.0 137.2L88.9 137.1L89.8 137.0L90.7 136.8L91.6 136.6L92.4 136.4L93.3 136.2L94.2 135.9L95.0 135.7L95.8 135.4L96.6 135.1L97.4 134.9L98.2 134.6L98.9 134.3L99.7 134.1L100.4 133.8L101.1 133.5L101.7 133.2L102.4 132.8L103.1 132.5L103.7 132.2L104.3 131.9L105.0 131.6L105.6 131.2L106.2 130.9L106.8 130.6L107.5 130.2L108.2 129.8L108.9 129.4L109.5 129.0L110.2 128.6L110.8 128.2L111.4 127.9L111.9 127.5L112.4 127.3L112.8 127.0L113.1 126.8L112.9 126.4L112.5 126.6L112.1 126.8L111.6 127.1L111.1 127.4L110.5 127.7L109.8 128.0L109.2 128.4L108.5 128.8L107.8 129.1L107.1 129.5L106.4 129.8L105.8 130.1L105.2 130.4L104.5 130.7L103.9 131.0L103.3 131.3L102.6 131.6L102.0 131.9L101.3 132.1L100.6 132.4L99.9 132.7L99.3 132.9L98.5 133.2L97.8 133.4L97.0 133.6L96.2 133.9L95.4 134.1L94.6 134.3L93.8 134.5L92.9 134.7L92.1 134.9L91.2 135.1L90.4 135.2L89.6 135.3L88.8 135.4L88.0 135.4L87.2 135.4L86.4 135.3L85.6 135.2L84.8 135.1L84.0 135.0L83.2 134.9L82.4 134.7L81.6 134.5L80.8 134.3L79.9 134.1L79.1 133.9L78.3 133.7L77.5 133.4L76.7 133.2L75.9 132.9L75.2 132.6L74.4 132.4L73.6 132.1L72.8 131.7L72.0 131.4L71.1 131.1L70.3 130.8L69.4 130.5L68.6 130.2L67.7 129.9L66.8 129.5L65.9 129.2L65.0 128.8L64.1 128.5L63.2 128.1L62.2 127.8L61.3 127.5L60.3 127.1L59.4 126.8L58.4 126.6L57.4 126.3L56.5 126.1L55.5 125.9L54.6 125.7L53.6 125.6L52.7 125.4L51.7 125.3L50.8 125.2L49.8 125.1L48.9 125.0L47.9 125.0L46.9 125.0L46.0 125.0L45.0 125.1L44.1 125.1L43.1 125.3L42.1 125.4L41.2 125.6L40.3 125.8L39.3 126.0L38.4 126.2L37.5 126.4L36.6 126.7L35.6 126.9L34.7 127.2L33.8 127.5L32.9 127.7L31.9 128.1L31.0 128.4L30.1 128.7L29.1 129.1L28.2 129.4L27.3 129.8L26.4 130.1L25.5 130.5L24.6 130.9L23.7 131.3L22.8 131.6L21.8 132.1L20.9 132.5L19.9 133.0L18.9 133.4L17.9 133.9L17.0 134.3L16.2 134.7L15.4 135.1L14.7 135.5L14.0 135.7L13.6 136.0Z" fill="#fff" filter="url(#rough)"/>
<path d="M9.7 163.3L10.3 163.1L11.0 162.8L11.8 162.5L12.8 162.2L13.8 161.8L14.8 161.4L16.0 161.0L17.1 160.6L18.2 160.2L19.3 159.8L20.4 159.4L21.4 159.1L22.4 158.8L23.4 158.4L24.4 158.1L25.4 157.8L26.4 157.5L27.4 157.2L28.4 156.9L29.4 156.7L30.4 156.4L31.4 156.1L32.4 155.9L33.4 155.7L34.5 155.4L35.6 155.2L36.7 155.0L37.8 154.8L38.9 154.5L40.0 154.4L41.0 154.2L42.1 154.0L43.2 153.9L44.2 153.8L45.2 153.7L46.1 153.7L47.0 153.7L47.9 153.7L48.8 153.8L49.6 153.9L50.5 154.0L51.3 154.1L52.2 154.2L53.0 154.4L53.9 154.6L54.7 154.8L55.6 155.0L56.5 155.2L57.3 155.4L58.2 155.6L59.1 155.9L59.9 156.2L60.8 156.5L61.7 156.8L62.6 157.1L63.6 157.4L64.5 157.8L65.4 158.1L66.3 158.4L67.2 158.6L68.1 158.9L68.9 159.2L69.7 159.4L70.5 159.7L71.4 159.9L72.2 160.2L73.0 160.4L73.9 160.6L74.8 160.9L75.7 161.1L76.6 161.2L77.5 161.4L78.5 161.5L79.4 161.7L80.4 161.8L81.3 161.9L82.3 161.9L83.3 162.0L84.3 162.1L85.3 162.1L86.3 162.1L87.2 162.0L88.2 162.0L89.2 161.9L90.1 161.8L91.1 161.6L92.0 161.4L92.9 161.2L93.8 161.0L94.6 160.7L95.5 160.5L96.4 160.2L97.2 159.9L98.0 159.6L98.8 159.3L99.6 158.9L100.4 158.6L101.2 158.2L102.0 157.9L102.7 157.5L103.5 157.1L104.2 156.7L104.9 156.3L105.7 155.9L106.4 155.5L107.1 155.0L107.8 154.6L108.6 154.1L109.4 153.6L110.2 153.1L111.1 152.5L112.0 151.9L112.9 151.3L113.8 150.7L114.7 150.1L115.5 149.6L116.2 149.0L116.9 148.6L117.5 148.2L117.9 147.9L117.5 147.1L117.0 147.3L116.4 147.6L115.6 148.0L114.8 148.4L113.9 148.8L113.0 149.3L112.0 149.7L111.1 150.2L110.1 150.7L109.1 151.1L108.2 151.5L107.4 151.9L106.6 152.2L105.8 152.6L105.1 152.9L104.3 153.2L103.6 153.6L102.8 153.9L102.1 154.2L101.4 154.5L100.6 154.7L99.9 155.0L99.2 155.2L98.4 155.5L97.6 155.7L96.8 155.9L96.0 156.1L95.2 156.3L94.4 156.5L93.6 156.7L92.8 156.9L92.0 157.0L91.2 157.1L90.4 157.2L89.6 157.3L88.8 157.3L88.0 157.3L87.2 157.3L86.3 157.3L85.5 157.2L84.6 157.1L83.7 157.0L82.8 156.9L81.9 156.8L81.0 156.7L80.2 156.5L79.3 156.4L78.5 156.2L77.7 156.0L76.9 155.8L76.1 155.6L75.4 155.4L74.6 155.2L73.8 154.9L73.0 154.7L72.2 154.4L71.4 154.2L70.5 153.9L69.7 153.6L68.8 153.4L67.9 153.1L67.1 152.8L66.2 152.6L65.3 152.3L64.3 152.0L63.4 151.7L62.4 151.4L61.5 151.1L60.5 150.9L59.5 150.6L58.5 150.4L57.5 150.2L56.6 150.1L55.7 149.9L54.7 149.8L53.8 149.6L52.9 149.5L51.9 149.4L51.0 149.3L50.0 149.2L49.0 149.2L48.0 149.2L46.9 149.2L45.9 149.3L44.8 149.4L43.7 149.6L42.6 149.8L41.4 150.0L40.3 150.2L39.2 150.5L38.0 150.8L36.9 151.1L35.8 151.4L34.7 151.7L33.6 152.0L32.6 152.3L31.5 152.7L30.5 153.0L29.5 153.3L28.4 153.7L27.4 154.1L26.4 154.5L25.4 154.9L24.5 155.3L23.5 155.7L22.5 156.1L21.5 156.5L20.6 156.9L19.6 157.4L18.5 157.9L17.5 158.4L16.4 159.0L15.3 159.5L14.3 160.1L13.2 160.6L12.3 161.2L11.4 161.6L10.7 162.0L10.0 162.4L9.5 162.7Z" fill="#fff"/>
<path d="M13.500 184.5 C34 173 52 172 70 179 C84 185 100 183 113 175.5" fill="none" stroke="#fff" stroke-width="5.400" stroke-linecap="round"/>
</svg>
<div class="a sb" style="left:235px;top:99px;width:13px;height:192px;background:#404040"></div>
<div class="a sbb" style="left:235px;top:100px;width:12px;height:12px;"></div>
<div class="a sbt" style="left:236px;top:113px;width:10px;height:143px;"></div>
<div class="a sbb" style="left:235px;top:277px;width:12px;height:12px;"></div>
<svg style="left:235px;top:100px" width="12" height="190"><path d="M3.500 8 L6 5 L8.500 8 M3.500 181 L6 184 L8.500 181" stroke="#ddd" stroke-width="1.200" fill="none"/></svg>
<svg style="left:41px;top:291px" width="207" height="19"><g class="ic" stroke-width="1.100"><rect x="2.500" y="2.500" width="10" height="10" rx="1.500"/><path d="M5 7 L7 9.500 L10.500 4.500"/><path d="M5 14.500 H14.500 V5"/><rect x="151.500" y="4.500" width="11" height="11" rx="1.500"/><path d="M157 2 V11 M154 8 L157 11 L160 8"/><rect x="170.500" y="2.500" width="9" height="9" rx="1.500"/><rect x="174.500" y="6.500" width="9" height="9" rx="1.500" fill="#4d4d4d"/><path d="M179 8.500 V13.500 M176.500 11 H181.500"/><path d="M191.500 5.500 H201.500 M193 5.500 L193.500 15.500 H199.500 L200 5.500 M194.500 3.500 H198.500 M195.300 7.500 V13.500 M197.700 7.500 V13.500"/></g></svg>
<!-- command bar icons -->
<svg style="left:250px;top:28px" width="815" height="26">
 <g stroke="#6a6a6a" stroke-width="1"><path d="M28.500 2V24M122.500 2V24M178.500 2V24M282.500 2V24M362.500 2V24M442.500 2V24M474.500 2V24"/></g>
 <rect x="366" y="1" width="23.500" height="24" rx="3" fill="#64708c"/>
 <rect x="390.500" y="1" width="23.500" height="24" rx="3" fill="#64708c"/>
 <!-- swirl -->
 <rect x="3.600" y="4.600" width="16.800" height="16.800" rx="1.800" class="ic" stroke-width="1.200"/>
 <path d="M11.500 7.500 C7 8.500 4.500 12 5.500 14.500 C6.500 18 10 19.500 13.500 18 C17 16.500 20 13 18.500 10.500 C17.500 8 13.500 8.500 11 10 C8.500 11.500 8 13.500 9.500 14.500 C11 15.500 14 14 15 12.300" class="ic" stroke-width="1.300"/>
 <!-- new doc -->
 <path d="M38.500 5.500 H50.500 V15 M46 20.500 H41.500 L38.500 17.500 Z M38.500 17.500 V5.500" class="ic" stroke-width="1.400"/>
 <path d="M38.500 17.500 H41.500 V20.500" class="ic" stroke-width="1"/>
 <circle cx="51.500" cy="19.500" r="4.300" fill="#4d4d4d" stroke="#b4b4b4" stroke-width="1.200"/>
 <path d="M49 19.500H54M51.500 17V22" class="ic" stroke-width="1.200"/>
 <!-- open -->
 <path d="M61 21 V6.500 H66 L67.500 8.500 H72" class="ic" stroke-width="1.300"/>
 <path d="M61 21.500 L63.500 12 H78.500 L76 21.500 Z" class="if"/>
 <path d="M70 9 C71 6 73 5.500 75 5.500 V3.500 L79 7 L75 10.500 V8.500 C73 8.500 71.500 8.500 70 9 Z" class="if"/>
 <!-- save -->
 <path d="M91 10.500 H89 L85.500 17.500 M95.500 10.500 H97.500 L101 17.500" class="ic" stroke-width="1.200"/>
 <rect x="83.500" y="17.500" width="19.500" height="3.800" rx="0.800" class="if"/>
 <path d="M93.300 4 V14.500 M89.800 11 L93.300 15 L96.800 11" class="ic" stroke-width="1.500"/>
 <path d="M108 12 L111.500 15.500 L115 12" class="ic" stroke-width="1.400"/>
 <!-- undo -->
 <path d="M131 9.500 H140 C148 9.500 148 20 140 20 H133" class="ic" stroke-width="1.500"/>
 <path d="M135 5 L130 9.500 L135 14 Z" class="if"/>
 <!-- redo dim -->
 <g opacity="0.350"><path d="M169 9.500 H160 C152 9.500 152 20 160 20 H167" class="ic" stroke-width="1.500"/>
 <path d="M165 5 L170 9.500 L165 14 Z" class="if"/></g>
 <!-- spinner -->
 <g stroke="#c8c8c8" stroke-width="1.800" stroke-linecap="butt" transform="translate(194,13)">
  <path d="M0.0 -5.5L0.0 -9.2M2.7 -4.8L4.6 -8.0M4.8 -2.8L8.0 -4.6M5.5 -0.0L9.2 -0.0M4.8 2.7L8.0 4.6M2.7 4.8L4.6 8.0M0.0 5.5L0.0 9.2M-2.8 4.8L-4.6 8.0M-4.8 2.8L-8.0 4.6M-5.5 0.0L-9.2 0.0M-4.8 -2.8L-8.0 -4.6M-2.8 -4.8L-4.6 -8.0"/>
 </g>
 <!-- select dashed dim -->
 <g opacity="0.400"><rect x="210.500" y="6.500" width="11" height="11" class="ic" stroke-width="1.100" stroke-dasharray="2 1.500"/><rect x="212" y="8" width="8" height="8" fill="#888"/>
 <path d="M219 20V23M222 19.500L224 22M224 16.500H227M223 13L226 11.500" class="ic" stroke-width="1"/></g>
 <!-- fill -->
 <g transform="translate(242.500,13.500)"><path d="M0 -9 L9.500 0 L0 9 L-7 2 C-9 3 -10 5 -9 7.500 C-10.500 4 -10.500 1 -9 0 Z" fill="#d0d0d0"/><path d="M0 -7 L6 -1 L-6 -1 Z" fill="#4d4d4d"/></g>
 <!-- transform -->
 <rect x="260.500" y="8.500" width="12" height="12" class="ic" stroke-width="1.400"/>
 <path d="M266.500 3.500V8" class="ic" stroke-width="1.200"/>
 <g class="if"><circle cx="266.500" cy="4" r="1.600"/><circle cx="260.500" cy="14.500" r="1.500"/><circle cx="272.500" cy="14.500" r="1.500"/><circle cx="266.500" cy="20.500" r="1.500"/><circle cx="266.500" cy="8.500" r="1.500"/></g>
 <!-- 3 dim -->
 <g opacity="0.300"><rect x="290.500" y="5.500" width="15" height="15" class="ic" stroke-width="1.100" stroke-dasharray="2.500 1.500"/><path d="M290 5 L307 22" class="ic" stroke-width="1.100"/>
 <rect x="314.500" y="5.500" width="15" height="15" class="ic" stroke-width="1.100" stroke-dasharray="2.500 1.500"/><path d="M330 6 V21 H315 Z" class="if"/>
 <rect x="338.500" y="5.500" width="15" height="15" rx="2" class="ic" stroke-width="1.100"/><rect x="341" y="8" width="10" height="10" class="ic" stroke-width="1" stroke-dasharray="2 1.200"/></g>
 <!-- snap 1 -->
 <path d="M371.500 9 V21.500 H384 Z" fill="none" stroke="#d0d0d0" stroke-width="1.300"/>
 <path d="M376 14.500 L378 17 L386 5.500 L383.500 3.500 Z" fill="#d0d0d0"/>
 <!-- snap 2 -->
 <path d="M394 15.500 H410.500 C410 25.500 394.500 25.500 394 15.500 Z" fill="none" stroke="#d0d0d0" stroke-width="1.300"/>
 <path d="M401 15 L402.500 17.500 L410.500 5.500 L408 3.500 Z" fill="#d0d0d0"/>
 <!-- snap 3 -->
 <path d="M417 15.500 H434 M417 21.500 H434 M421.500 11 V24 M430.500 13 V24" stroke="#b4b4b4" stroke-width="1" fill="none"/>
 <path d="M424.500 15 L426.500 17.500 L435 5.500 L432.500 3.500 Z" fill="#d0d0d0"/>
 <!-- phone -->
 <rect x="452.500" y="3.500" width="12" height="19" rx="1.500" class="ic" stroke-width="1.300"/>
 <rect x="452.500" y="19" width="12" height="3.500" class="if"/>
 <g fill="#b4b4b4"><rect x="455" y="6" width="1.500" height="1.500"/><rect x="457.700" y="6" width="1.500" height="1.500"/><rect x="460.400" y="6" width="1.500" height="1.500"/><rect x="455" y="8.700" width="1.500" height="1.500"/><rect x="457.700" y="8.700" width="1.500" height="1.500"/><rect x="460.400" y="8.700" width="1.500" height="1.500"/><rect x="455" y="11.400" width="1.500" height="1.500"/><rect x="457.700" y="11.400" width="1.500" height="1.500"/><rect x="455" y="14.100" width="1.500" height="1.500"/><rect x="457.700" y="14.100" width="1.500" height="1.500"/></g>
 <!-- help -->
 <path d="M485.500 21.500 C480 19 481 6 490 6 C498 6 499.500 16 492.500 19.500 L487 20 L484 23 Z" class="ic" stroke-width="1.200"/>
 <path d="M494 6 L499 3.500 M499 3.500 H496 M499 3.500 V6.500" class="ic" stroke-width="1.100"/>
</svg>
<span class="t" style="left:736px;top:32px;font-size:14px;color:#b4b4b4;font-weight:700;transform:scaleX(0.934)">?</span>
<!-- tab glyphs -->
<svg style="left:250px;top:55px" width="815" height="20">
 <path d="M85 6.500 L92 13.500 M92 6.500 L85 13.500" stroke="#c8c8c8" stroke-width="1.100"/>
 <circle cx="188.300" cy="10.500" r="2" fill="#d8d8d8"/>
 <path d="M806 8 L809.500 11.500 L813 8" stroke="#c8c8c8" stroke-width="1.400" fill="none"/>
</svg>
<svg style="left:1053px;top:76px" width="12" height="871"><path d="M3.500 7.500 L6 5 L8.500 7.500" stroke="#ddd" stroke-width="1.200" fill="none"/><path d="M3.500 867.500 L6 870 L8.500 867.500" stroke="#bbb" stroke-width="1" fill="none"/></svg>
<!-- canvas drawing -->
<svg style="left:0;top:0" width="1216" height="947"><defs><clipPath id="cvclip"><rect x="257" y="202" width="796" height="600"/></clipPath>
<g id="art" fill="none" stroke="#000" stroke-linecap="round" stroke-linejoin="round">
<path d="M257 520.500 C270 518.500 285 517 300 515 C320 511.500 335 509.500 350 507.500 C370 505 385 503 400 501 C415 499.500 428 499.500 440 499 C450 498.500 458 497.500 465 496 C474 493.500 480 491 487.500 490 C493 489.800 498 490.200 502.500 490.700" stroke-width="1.600"/>
<path d="M502.500 490.700 L548.700 497" stroke-width="2.200"/>
<path d="M548.700 497 C556 500 562 503 567.500 506.200 C569.500 509 570 512 570.500 515 C571.500 520 571.800 525 572 530 C573 547 574 563 574.500 580 C575 597 575.200 613 575 630 C574.800 647 574.500 663 573.200 681 C572.500 700 571.800 720 572 740 C572.200 750 572.600 758 573.200 765 C574 778 575.500 790 577 802" stroke-width="1.100"/>
<path d="M257 531 C263 527.500 269 525.500 275 523.700 C283 522 291 521 300 520 C317 519 333 518.500 350 517.500 C367 515.500 383 513.500 400 511 C413 509.300 427 507.500 437 506.300" stroke-width="1.200"/>
<path d="M435 508 C438 523 441.500 540 443.700 555 C445.500 572 447 588 447.500 605 C447.500 618 447 630 446 642.500 C445 655 444 668 442.500 680 C441 692 439.500 704 437.500 716 C434.500 745 431.500 775 429.200 802" stroke-width="0.900"/>
<path d="M437 509 C440 523 442.500 535 444 548" stroke-width="0.600" stroke="#555"/>
<path d="M441 500 C443.500 510 446 520 447.500 530 C449.300 547 450.300 563 450.700 580 C451 597 451.200 613 451 630 C451.200 650 451.300 670 451 690 C450.500 705 450 715 449 728 C447 753 445 778 443.700 802" stroke-width="1.500"/>
<path d="M487.500 490 C491 512 494.500 533 497.500 555 C499.500 572 501 588 502.500 605 C503.500 622 504.200 638 504.600 655 C504.800 690 504.500 720 504.300 750 C504.200 770 504.200 785 504.200 802" stroke-width="1.300"/>
<path d="M502.500 491 C507 508 511.500 525 515 542.500 C517 559 518.700 576 520 592.500 C521 613 521.800 634 522 655 C522.200 675 522.300 695 522.500 715 C523 732 524 748 525.500 765 C526.300 777 527 790 527.500 802" stroke-width="1"/>
<path d="M537.500 497 C544 503.500 550 510 555 517.500 C558.500 522 561.500 527 563.700 532.500 C561.500 548 560.300 564 560 580 C560 597 560.400 613 561 630 C561.300 650 562.300 670 563.700 690 C565.500 707 567.700 723 570 740 C573 761 576 781 578.700 802" stroke-width="0.900"/>
<path d="M498.5 513.7 Q501.7 513.3 504.9 514.3" stroke-width="0.700" stroke="#999"/>
<path d="M500.3 522.7 Q503.5 522.3 506.7 523.3" stroke-width="0.700" stroke="#666"/>
<path d="M502.6 533.2 Q505.8 533.4 509.0 534.8" stroke-width="0.700" stroke="#666"/>
<path d="M504.5 541.8 Q507.7 542.6 510.9 544.2" stroke-width="0.700" stroke="#999"/>
<path d="M506.1 557.8 Q509.3 556.0 512.5 556.2" stroke-width="0.700" stroke="#666"/>
<path d="M507.2 568.8 Q510.4 567.0 513.6 567.2" stroke-width="0.700" stroke="#666"/>
<path d="M508.4 578.8 Q511.6 579.6 514.8 581.2" stroke-width="0.700" stroke="#999"/>
<path d="M509.9 596.2 Q513.1 596.4 516.3 597.8" stroke-width="0.700" stroke="#666"/>
<path d="M510.6 610.7 Q513.8 610.3 517.0 611.3" stroke-width="0.700" stroke="#666"/>
<path d="M511.4 632.7 Q514.6 632.3 517.8 633.3" stroke-width="0.700" stroke="#999"/>
<path d="M512.0 649.8 Q515.2 650.6 518.4 652.2" stroke-width="0.700" stroke="#666"/>
<path d="M512.3 670.8 Q515.5 671.6 518.7 673.2" stroke-width="0.700" stroke="#666"/>
<path d="M512.3 688.8 Q515.5 689.6 518.7 691.2" stroke-width="0.700" stroke="#999"/>
<path d="M512.4 706.7 Q515.6 706.3 518.8 707.3" stroke-width="0.700" stroke="#666"/>
<path d="M512.6 719.7 Q515.8 719.3 519.0 720.3" stroke-width="0.700" stroke="#666"/>
<path d="M513.2 734.7 Q516.4 734.3 519.6 735.3" stroke-width="0.700" stroke="#999"/>
<path d="M513.8 750.8 Q517.0 751.6 520.2 753.2" stroke-width="0.700" stroke="#666"/>
<path d="M514.3 768.8 Q517.5 767.0 520.7 767.2" stroke-width="0.700" stroke="#666"/>
<path d="M514.7 779.8 Q517.9 778.0 521.1 778.2" stroke-width="0.700" stroke="#999"/>
<path d="M515.2 792.7 Q518.4 792.3 521.6 793.3" stroke-width="0.700" stroke="#666"/>
<path d="M573.700 531.200 C580 536 586 541 591.200 544.500" stroke-width="0.900"/>
<path d="M570.500 548.700 L591.200 544.500 C603 551 615 558.500 627.500 565 L573.700 574.500 Z" fill="#000" stroke-width="1"/>
<path d="M627.500 565 C637 569 646 573 655 577.500 C664 582 672 587 680 592.500 C689 599 697 606.500 705 615 C712 622 717.500 628.500 722.500 635 C726.500 641 729.500 648 731.200 655 C733 661 734.300 667 735.500 674" stroke-width="1.500"/>
<path d="M721.300 655 C726 662 731 669 735.700 675.800 C742 685 749 695.500 755 706.500 C761 721 766 736 770.800 750.800 C774 759.500 777 768.500 779.600 777.400 C781.500 785 783 793 784.500 802" stroke-width="1.300"/>
<path d="M574.500 683 L575.700 677.500 C582 665 588.500 652 595 640 C601 631 608 623.500 615 617.500 C619 615.800 623 615 627.500 615.300 C634 616.300 640 618 646.600 620.400" stroke-width="1.200"/>
<path d="M655.4 644.4 Q680.4 723.2 706.1 802.0" stroke-width="0.49" stroke="#2a2a2a"/>
<path d="M654.0 639.7 Q682.9 720.8 708.4 802.0" stroke-width="0.50" stroke="#2a2a2a"/>
<path d="M655.5 641.8 Q684.4 721.9 708.8 802.0" stroke-width="0.49" stroke="#2a2a2a"/>
<path d="M652.4 632.5 Q683.3 717.3 709.5 802.0" stroke-width="0.38" stroke="#2a2a2a"/>
<path d="M653.0 628.8 Q682.8 715.4 711.3 802.0" stroke-width="0.36" stroke="#2a2a2a"/>
<path d="M656.4 636.2 Q686.4 719.1 713.3 802.0" stroke-width="0.50" stroke="#2a2a2a"/>
<path d="M664.4 654.8 Q689.2 728.4 714.0 802.0" stroke-width="0.49" stroke="#2a2a2a"/>
<path d="M661.8 644.5 Q690.0 723.3 715.0 802.0" stroke-width="0.33" stroke="#2a2a2a"/>
<path d="M659.3 635.9 Q687.1 719.0 715.6 802.0" stroke-width="0.48" stroke="#2a2a2a"/>
<path d="M658.8 631.3 Q689.0 716.7 717.8 802.0" stroke-width="0.32" stroke="#2a2a2a"/>
<path d="M661.7 641.0 Q690.1 721.5 719.2 802.0" stroke-width="0.43" stroke="#2a2a2a"/>
<path d="M661.6 639.7 Q692.6 720.8 719.3 802.0" stroke-width="0.52" stroke="#2a2a2a"/>
<path d="M668.9 655.0 Q694.4 728.5 720.4 802.0" stroke-width="0.42" stroke="#2a2a2a"/>
<path d="M658.4 626.1 Q691.4 714.1 721.8 802.0" stroke-width="0.32" stroke="#2a2a2a"/>
<path d="M674.2 676.3 L689.6 747.0" stroke-width="0.400" stroke="#555"/>
<path d="M678.5 669.9 L695.2 727.5" stroke-width="0.400" stroke="#555"/>
<path d="M677.2 672.7 L694.9 733.3" stroke-width="0.400" stroke="#555"/>
<path d="M678.7 671.6 L695.2 735.2" stroke-width="0.400" stroke="#555"/>
<path d="M675.2 668.9 L696.6 726.5" stroke-width="0.400" stroke="#555"/>
<path d="M676.7 665.1 L693.1 724.5" stroke-width="0.400" stroke="#555"/>
<path d="M670 672 C676 688 683 708 690 728 C697 748 706 776 714 802" stroke-width="0.700" stroke="#111"/>
<path d="M684 712 C688 723 692 735 696 748 C701 764 706 783 711 802" stroke-width="1.300" stroke="#111"/>
<path d="M618.500 730 C618 755 616.500 780 615.500 802" stroke-width="0.600" stroke="#888"/>
<g fill="#000" stroke="none">
<path d="M592 692 C595 690 596.500 694 595.500 698 C598 699 597 702 594.500 703 C592 706 590.500 703 591.500 699 C590.500 696 591 693.500 592 692 Z"/>
<path d="M588.500 716 C590.500 714.500 592 717.500 592 721 C592.500 726 594 730 595 734 L597 735 L595.500 737 L596.500 745 L595 745.500 L594 738 L592.500 736 L593.500 734 C591 729 588.500 722 588.500 716 Z"/>
<path d="M590 718 C591 717.500 591.300 720 591 723 C590.300 722 589.800 720 590 718Z" fill="#fff"/>
<path d="M613 757 L616 759.500 C619.500 762 621 766 622 770 L618 768 C615.500 766 614 762.500 613 757 Z"/>
<path d="M703 717 C705.500 716 706.500 720 706 723 C708 726 707 730 705 730.500 C703 729 702.500 725 702.500 722 C702 720 702 718 703 717Z"/>
<path d="M734 726.500 L738 730 L741 727.500 L741.500 731 L745.500 732.500 L742 735 L741 737.500 L737.500 734 L735 731 Z"/>
<path d="M724.600 760 L726 760.500 L730.800 770 L729.500 771 Z"/>
<ellipse cx="773" cy="774" rx="3.400" ry="8.400" transform="rotate(-8 773 774)"/>
<path d="M757 782 C760 780 764 783.500 766 787 L767.500 792 L764 791.500 L763.500 795 L760.500 792.500 C758 790 756.500 786 757 782Z"/>
<path d="M737 787.500 L742.500 788 L741 790.500 L743 794 L740.500 794.500 L738.500 791 L737.500 793 Z"/>
<path d="M692 779 C696 777 701 780 703 785 C704.500 790 703 795 699 797.500 C695 799 691.500 796 691 790 C690.500 786 691 782 692 779Z"/>
<path d="M696 774 L697 774 L697.300 780 L695.500 780 Z M697 797 L699.500 797 L700 802 L697.500 802Z"/>
<path d="M692.500 759.500 C693.500 759 694 763 693.600 768 L692.400 768 Z"/>
<path d="M666.500 721 C667.500 720.500 668.300 725 668 729 L666.700 729 Z"/>
<path d="M646.700 770 L648 770 L648.300 774 L650 774.500 L648.300 775.500 L648.300 780.500 L647 780.500 L647 775.500 L646 775 L647 774Z"/>
<path d="M727.500 681.500 L729 683 L732 688.500 L730 687 Z"/>
</g>
<path d="M699 785 C700.500 783 703.500 786 702.500 790 C702 793 700.500 794 699.500 793" stroke="#fff" stroke-width="0.500"/>
<path d="M640.500 732.500 L642.500 727 L646 733.500" stroke-width="0.500" stroke="#777"/>
</g></defs>
<use href="#art" clip-path="url(#cvclip)"/>
</svg>
<!-- tool property panel -->
<div class="a hd" style="left:41px;top:310px;width:207px;height:19px;background:#363636"></div>
<div class="a hd" style="left:41px;top:311px;width:18px;height:18px;"></div>
<div class="a tab" style="left:59px;top:315px;width:87px;height:14px;"></div>
<div class="a tab" style="left:41px;top:329px;width:207px;height:214px;"></div>
<svg style="left:41px;top:315px" width="110" height="16"><path d="M5 3.500H12M5 6.500H12M5 9.500H12" stroke="#8c8c8c" stroke-width="1"/><g class="ic" stroke-width="1.200"><path d="M24 7.500H27.500M33 7.500H40M24 12.500H33.500M38.500 12.500H40"/></g><circle cx="30.300" cy="7.500" r="2" class="if"/><circle cx="36" cy="12.500" r="2" class="if"/></svg>
<span class="t" style="left:87.500px;top:318.300px;font-size:9.800px;color:#d0d0d0;transform:scaleX(0.694)">ツールプロパティ</span>
<div class="a" style="left:41px;top:335px;width:103px;height:38px;background:#b4b4b4"></div>
<div class="a" style="left:42px;top:336px;width:31px;height:13px;background:#8e8e8e;border-radius:2px"></div>
<span class="t" style="left:42.500px;top:335.500px;font-size:12px;color:#e4e4e4;transform:scaleX(0.885)">Gペン</span>
<svg style="left:41px;top:335px" width="207" height="38"><path d="M20 29 C45 10 70 3 100 13 C120 22 140 30 165 22 C176 18 184 13 191 9 C180 19 168 26 152 28 C130 30 112 25 95 17 C72 8 45 14 20 29 Z" fill="#000"/>
<g transform="translate(190,21)"><rect x="2" y="5" width="7.500" height="5.500" rx="1" fill="#ddd"/><path d="M-0.500 5 V3 C-0.500 0 3.500 0 3.500 3 V5" fill="none" stroke="#ddd" stroke-width="1.200"/></g></svg>
<div class="a" style="left:41px;top:374px;width:194px;height:148px;background:#404040"></div>
<span class="t" style="left:56.500px;top:378.100px;font-size:12px;color:#ececec;transform:scaleX(0.784)">ブラシサイズ</span>
<span class="t" style="left:56.500px;top:404.600px;font-size:12px;color:#ececec;transform:scaleX(1.000)">不透明度</span>
<span class="t" style="left:56.500px;top:437px;font-size:12px;color:#ececec;transform:scaleX(0.733)">アンチエイリアス</span>
<span class="t" style="left:57px;top:458.200px;font-size:12px;color:#ececec;transform:scaleX(0.883)">手ブレ補正</span>
<span class="t" style="left:75px;top:488.700px;font-size:12px;color:#ececec;transform:scaleX(0.869)">速度による手ブレ補正</span>
<span class="t" style="left:75px;top:511.900px;font-size:12px;color:#767676;transform:scaleX(0.825)">ベクター吸着</span>
<span class="t" style="left:184.500px;top:382.500px;font-size:12.500px;color:#ececec;transform:scaleX(0.739)">10.0</span>
<span class="t" style="left:186.500px;top:409.500px;font-size:12.500px;color:#ececec;transform:scaleX(0.791)">100</span>
<span class="t" style="left:197.500px;top:463.700px;font-size:12.500px;color:#ececec;transform:scaleX(0.791)">6</span>
<svg style="left:41px;top:374px" width="207" height="148">
<path d="M10 28.500H190M10 55.500H190M10 82.500H190M10 132.500H190" stroke="#606060" stroke-width="1"/>
<path d="M37.500 23.5 H117.500 V21.5" stroke="#6e6e6e" stroke-width="1" fill="none"/>
<rect x="37.500" y="17.5" width="37.5" height="6" fill="#5c5c5c" stroke="#787878" stroke-width="1"/>
<path d="M37.500 50.5 H117.500 V48.5" stroke="#6e6e6e" stroke-width="1" fill="none"/>
<rect x="37.500" y="44.5" width="80" height="6" fill="#5c5c5c" stroke="#787878" stroke-width="1"/>
<path d="M37.500 104.5 H117.500 V102.5" stroke="#6e6e6e" stroke-width="1" fill="none"/>
<rect x="37.500" y="98.5" width="41" height="6" fill="#5c5c5c" stroke="#787878" stroke-width="1"/>
<path d="M165 13 L168.500 9 L172 13 M165 17 L168.500 21 L172 17" stroke="#ccc" stroke-width="1.100" fill="none"/>
<path d="M165 40 L168.500 36 L172 40 M165 44 L168.500 48 L172 44" stroke="#ccc" stroke-width="1.100" fill="none"/>
<path d="M165 94 L168.500 90 L172 94 M165 98 L168.500 102 L172 98" stroke="#ccc" stroke-width="1.100" fill="none"/>
<rect x="176.500" y="3.500" width="14" height="23" rx="1.500" fill="#555" stroke="#6e6e6e"/>
<path d="M180 10 L183.500 13.500 L187 10 M180 15 L183.500 18.500 L187 15" stroke="#d0d0d0" stroke-width="1.200" fill="none"/>
<rect x="176.500" y="30.500" width="14" height="23" rx="1.500" fill="#555" stroke="#6e6e6e"/>
<rect x="180" y="38.500" width="7" height="7" rx="1" fill="none" stroke="#d0d0d0" stroke-width="1.100"/><path d="M180.500 45 L186.500 39" stroke="#d0d0d0" stroke-width="1"/>
<rect x="89.500" y="57.500" width="101" height="23" rx="2" fill="#555" stroke="#6e6e6e"/>
<rect x="155.500" y="58" width="21.500" height="22" fill="#7487c3"/>
<defs><radialGradient id="aa3"><stop offset="0.550" stop-color="#b8b8b8"/><stop offset="0.600" stop-color="#8a8a8a"/><stop offset="1" stop-color="#7a7a7a"/></radialGradient><radialGradient id="aa4"><stop offset="0" stop-color="#c0c0c0"/><stop offset="0.350" stop-color="#b4b4b8"/><stop offset="1" stop-color="#7487c3"/></radialGradient></defs>
<path d="M97 62 H103 V64 H105 V66 H107 V72 H105 V74 H103 V76 H97 V74 H95 V72 H93 V66 H95 V64 H97 Z" fill="#b8b8b8"/>
<circle cx="122" cy="69" r="7.200" fill="#b8b8b8"/>
<circle cx="144" cy="69" r="8" fill="url(#aa3)"/>
<circle cx="166" cy="69" r="9" fill="url(#aa4)"/>
<path d="M180 67 L183.500 70.500 L187 67" stroke="#d0d0d0" stroke-width="1.200" fill="none"/>
<rect x="4.500" y="116.500" width="10" height="10" rx="1" fill="#4a4a4a" stroke="#7a7a7a"/><path d="M6.500 121.500H12.500M9.500 118.500V124.500" stroke="#e0e0e0" stroke-width="1.200"/>
<rect x="16.500" y="114.500" width="13" height="13" rx="1.500" fill="#5a5a5a" stroke="#707070"/><path d="M19 121 L22 124.500 L27 117" stroke="#fff" stroke-width="1.600" fill="none"/>
<rect x="16.500" y="137.500" width="13" height="12" rx="1.500" fill="#464646"/>
<rect x="96.5" y="136.500" width="14" height="13" fill="#444" stroke="#4e4e4e"/>
<rect x="112.5" y="136.500" width="14" height="13" fill="#444" stroke="#4e4e4e"/>
<rect x="128.5" y="136.500" width="14" height="13" fill="#444" stroke="#4e4e4e"/>
<rect x="144.5" y="136.500" width="14" height="13" fill="#444" stroke="#4e4e4e"/>
<rect x="160.5" y="136.500" width="14" height="13" fill="#444" stroke="#4e4e4e"/>
<path d="M181 140 L185 144 L181 148" stroke="#666" stroke-width="1.100" fill="none"/>
</svg>
<div class="a sb" style="left:235px;top:374px;width:13px;height:148px;background:#404040"></div>
<div class="a sbb" style="left:235px;top:375px;width:12px;height:11px;"></div>
<div class="a sbt" style="left:236px;top:388px;width:10px;height:116px;"></div>
<div class="a sbb" style="left:235px;top:510px;width:12px;height:11px;"></div>
<svg style="left:235px;top:375px" width="12" height="147"><path d="M3.500 7 L6 4.500 L8.500 7 M3.500 139 L6 141.500 L8.500 139" stroke="#ddd" stroke-width="1.200" fill="none"/></svg>
<div class="a tab" style="left:41px;top:522px;width:207px;height:21px;"></div>
<svg style="left:41px;top:522px" width="207" height="21"><circle cx="177" cy="11.500" r="6.500" class="ic" stroke-width="1.100" stroke-dasharray="33 8" transform="rotate(-60 177 11.500)"/><path d="M177 5 V11" class="ic" stroke-width="1.100"/><circle cx="177" cy="11.500" r="1.600" class="if"/>
<path d="M192 6.500 C191 3 195 2 196.500 3.500 L194.500 6 L196 7.500 L198.500 5.500 C199.500 8 197 10 195.500 9.500 L203 16 C204 17.500 202 19 201 18 L194 10.500 C193 10 192.500 8.500 192 6.500Z" class="ic" stroke-width="1.100"/></svg>
<!-- brush size panel -->
<div class="a" style="left:41px;top:543px;width:207px;height:19px;background:#363636"></div>
<div class="a hd" style="left:41px;top:544px;width:18px;height:18px;"></div>
<div class="a tab" style="left:59px;top:548px;width:75px;height:14px;"></div>
<div class="a tab" style="left:41px;top:562px;width:207px;height:214px;"></div>
<svg style="left:41px;top:548px" width="100" height="16"><path d="M5 3.5H12M5 6.5H12M5 9.5H12" stroke="#8c8c8c" stroke-width="1"/><g class="ic" stroke-width="1.100"><circle cx="26.700" cy="10.300" r="3.800"/><path d="M29.500 6.200 A5 5 0 1 1 29.500 13.800"/><path d="M25 10.300 H37.500 M27 8.500 L25 10.300 L27 12.100 M35.500 8.500 L37.500 10.300 L35.500 12.100"/></g></svg>
<span class="t" style="left:87.500px;top:551.400px;font-size:9.800px;color:#d0d0d0;transform:scaleX(0.729)">ブラシサイズ</span>
<div class="a" style="left:40px;top:567px;width:195px;height:208px;background:#2c2c2c"></div>
<svg style="left:0;top:0" width="250" height="777"><defs><clipPath id="bsclip"><rect x="40" y="567" width="195" height="208"/></clipPath></defs><g clip-path="url(#bsclip)">
<rect x="40" y="567" width="32.5" height="40" fill="#404040"/>
<circle cx="56.2" cy="583.6" r="0.5" fill="#fff"/>
<rect x="73.5" y="567" width="31.0" height="40" fill="#404040"/>
<circle cx="89.0" cy="583.6" r="0.5" fill="#fff"/>
<rect x="105.5" y="567" width="31.0" height="40" fill="#404040"/>
<circle cx="121.0" cy="583.6" r="0.6" fill="#fff"/>
<rect x="137.5" y="567" width="31.5" height="40" fill="#404040"/>
<circle cx="153.2" cy="583.6" r="0.7" fill="#fff"/>
<rect x="170" y="567" width="31.5" height="40" fill="#404040"/>
<circle cx="185.8" cy="583.6" r="0.8" fill="#fff"/>
<rect x="202.5" y="567" width="30.5" height="40" fill="#404040"/>
<circle cx="217.8" cy="583.6" r="0.9" fill="#fff"/>
<rect x="40" y="608" width="32.5" height="39" fill="#404040"/>
<circle cx="56.2" cy="623.6" r="1.6" fill="#fff"/>
<rect x="73.5" y="608" width="31.0" height="39" fill="#404040"/>
<circle cx="89.0" cy="623.6" r="2.1" fill="#fff"/>
<rect x="105.5" y="608" width="31.0" height="39" fill="#404040"/>
<circle cx="121.0" cy="623.6" r="2.5" fill="#fff"/>
<rect x="137.5" y="608" width="31.5" height="39" fill="#404040"/>
<circle cx="153.2" cy="623.6" r="2.9" fill="#fff"/>
<rect x="170" y="608" width="31.5" height="39" fill="#404040"/>
<circle cx="185.8" cy="623.6" r="3.3" fill="#fff"/>
<rect x="202.5" y="608" width="30.5" height="39" fill="#5f6b84"/>
<circle cx="217.8" cy="623.6" r="4.0" fill="#fff"/>
<rect x="40" y="648" width="32.5" height="39" fill="#404040"/>
<circle cx="56.2" cy="663.6" r="5.4" fill="#fff"/>
<rect x="73.5" y="648" width="31.0" height="39" fill="#404040"/>
<circle cx="89.0" cy="663.6" r="7" fill="#fff"/>
<rect x="105.5" y="648" width="31.0" height="39" fill="#404040"/>
<circle cx="121.0" cy="663.6" r="7.9" fill="#fff"/>
<rect x="137.5" y="648" width="31.5" height="39" fill="#404040"/>
<circle cx="153.2" cy="663.6" r="9.3" fill="#9c9c9c"/>
<clipPath id="cc23"><rect x="137.5" y="648" width="31.5" height="23.200"/></clipPath>
<circle cx="153.2" cy="663.6" r="9.3" fill="#fff" clip-path="url(#cc23)"/>
<rect x="170" y="648" width="31.5" height="39" fill="#56617a"/>
<circle cx="185.8" cy="663.6" r="11.9" fill="#9c9c9c"/>
<clipPath id="cc24"><rect x="170" y="648" width="31.5" height="23.200"/></clipPath>
<circle cx="185.8" cy="663.6" r="11.9" fill="#fff" clip-path="url(#cc24)"/>
<rect x="202.5" y="648" width="30.5" height="39" fill="#404040"/>
<circle cx="217.8" cy="663.6" r="11.9" fill="#9c9c9c"/>
<clipPath id="cc25"><rect x="202.5" y="648" width="30.5" height="23.200"/></clipPath>
<circle cx="217.8" cy="663.6" r="11.9" fill="#fff" clip-path="url(#cc25)"/>
<rect x="40" y="688" width="32.5" height="39" fill="#404040"/>
<circle cx="56.2" cy="703.6" r="11.9" fill="#9c9c9c"/>
<clipPath id="cc30"><rect x="40" y="688" width="32.5" height="23.200"/></clipPath>
<circle cx="56.2" cy="703.6" r="11.9" fill="#fff" clip-path="url(#cc30)"/>
<rect x="73.5" y="688" width="31.0" height="39" fill="#404040"/>
<circle cx="89.0" cy="703.6" r="11.9" fill="#9c9c9c"/>
<clipPath id="cc31"><rect x="73.5" y="688" width="31.0" height="23.200"/></clipPath>
<circle cx="89.0" cy="703.6" r="11.9" fill="#fff" clip-path="url(#cc31)"/>
<rect x="105.5" y="688" width="31.0" height="39" fill="#404040"/>
<circle cx="121.0" cy="703.6" r="11.9" fill="#9c9c9c"/>
<clipPath id="cc32"><rect x="105.5" y="688" width="31.0" height="23.200"/></clipPath>
<circle cx="121.0" cy="703.6" r="11.9" fill="#fff" clip-path="url(#cc32)"/>
<rect x="137.5" y="688" width="31.5" height="39" fill="#404040"/>
<circle cx="153.2" cy="703.6" r="11.9" fill="#9c9c9c"/>
<clipPath id="cc33"><rect x="137.5" y="688" width="31.5" height="23.200"/></clipPath>
<circle cx="153.2" cy="703.6" r="11.9" fill="#fff" clip-path="url(#cc33)"/>
<rect x="170" y="688" width="31.5" height="39" fill="#404040"/>
<circle cx="185.8" cy="703.6" r="11.9" fill="#9c9c9c"/>
<clipPath id="cc34"><rect x="170" y="688" width="31.5" height="23.200"/></clipPath>
<circle cx="185.8" cy="703.6" r="11.9" fill="#fff" clip-path="url(#cc34)"/>
<rect x="202.5" y="688" width="30.5" height="39" fill="#404040"/>
<circle cx="217.8" cy="703.6" r="11.9" fill="#9c9c9c"/>
<clipPath id="cc35"><rect x="202.5" y="688" width="30.5" height="23.200"/></clipPath>
<circle cx="217.8" cy="703.6" r="11.9" fill="#fff" clip-path="url(#cc35)"/>
<rect x="40" y="728" width="32.5" height="39" fill="#404040"/>
<circle cx="56.2" cy="743.6" r="11.9" fill="#9c9c9c"/>
<clipPath id="cc40"><rect x="40" y="728" width="32.5" height="23.200"/></clipPath>
<circle cx="56.2" cy="743.6" r="11.9" fill="#fff" clip-path="url(#cc40)"/>
<rect x="73.5" y="728" width="31.0" height="39" fill="#404040"/>
<circle cx="89.0" cy="743.6" r="11.9" fill="#9c9c9c"/>
<clipPath id="cc41"><rect x="73.5" y="728" width="31.0" height="23.200"/></clipPath>
<circle cx="89.0" cy="743.6" r="11.9" fill="#fff" clip-path="url(#cc41)"/>
<rect x="105.5" y="728" width="31.0" height="39" fill="#404040"/>
<circle cx="121.0" cy="743.6" r="11.9" fill="#9c9c9c"/>
<clipPath id="cc42"><rect x="105.5" y="728" width="31.0" height="23.200"/></clipPath>
<circle cx="121.0" cy="743.6" r="11.9" fill="#fff" clip-path="url(#cc42)"/>
<rect x="137.5" y="728" width="31.5" height="39" fill="#404040"/>
<circle cx="153.2" cy="743.6" r="11.9" fill="#9c9c9c"/>
<clipPath id="cc43"><rect x="137.5" y="728" width="31.5" height="23.200"/></clipPath>
<circle cx="153.2" cy="743.6" r="11.9" fill="#fff" clip-path="url(#cc43)"/>
<rect x="170" y="728" width="31.5" height="39" fill="#404040"/>
<circle cx="185.8" cy="743.6" r="11.9" fill="#9c9c9c"/>
<clipPath id="cc44"><rect x="170" y="728" width="31.5" height="23.200"/></clipPath>
<circle cx="185.8" cy="743.6" r="11.9" fill="#fff" clip-path="url(#cc44)"/>
<rect x="202.5" y="728" width="30.5" height="39" fill="#404040"/>
<circle cx="217.8" cy="743.6" r="11.9" fill="#9c9c9c"/>
<clipPath id="cc45"><rect x="202.5" y="728" width="30.5" height="23.200"/></clipPath>
<circle cx="217.8" cy="743.6" r="11.9" fill="#fff" clip-path="url(#cc45)"/>
<rect x="40" y="768" width="32.5" height="39" fill="#404040"/>
<circle cx="56.2" cy="783.6" r="11.9" fill="#9c9c9c"/>
<clipPath id="cc50"><rect x="40" y="768" width="32.5" height="23.200"/></clipPath>
<circle cx="56.2" cy="783.6" r="11.9" fill="#fff" clip-path="url(#cc50)"/>
<rect x="73.5" y="768" width="31.0" height="39" fill="#404040"/>
<circle cx="89.0" cy="783.6" r="11.9" fill="#9c9c9c"/>
<clipPath id="cc51"><rect x="73.5" y="768" width="31.0" height="23.200"/></clipPath>
<circle cx="89.0" cy="783.6" r="11.9" fill="#fff" clip-path="url(#cc51)"/>
<rect x="105.5" y="768" width="31.0" height="39" fill="#404040"/>
<circle cx="121.0" cy="783.6" r="11.9" fill="#9c9c9c"/>
<clipPath id="cc52"><rect x="105.5" y="768" width="31.0" height="23.200"/></clipPath>
<circle cx="121.0" cy="783.6" r="11.9" fill="#fff" clip-path="url(#cc52)"/>
<rect x="137.5" y="768" width="31.5" height="39" fill="#404040"/>
<circle cx="153.2" cy="783.6" r="11.9" fill="#9c9c9c"/>
<clipPath id="cc53"><rect x="137.5" y="768" width="31.5" height="23.200"/></clipPath>
<circle cx="153.2" cy="783.6" r="11.9" fill="#fff" clip-path="url(#cc53)"/>
<rect x="170" y="768" width="31.5" height="39" fill="#404040"/>
<circle cx="185.8" cy="783.6" r="11.9" fill="#9c9c9c"/>
<clipPath id="cc54"><rect x="170" y="768" width="31.5" height="23.200"/></clipPath>
<circle cx="185.8" cy="783.6" r="11.9" fill="#fff" clip-path="url(#cc54)"/>
<rect x="202.5" y="768" width="30.5" height="39" fill="#404040"/>
<circle cx="217.8" cy="783.6" r="11.9" fill="#9c9c9c"/>
<clipPath id="cc55"><rect x="202.5" y="768" width="30.5" height="23.200"/></clipPath>
<circle cx="217.8" cy="783.6" r="11.9" fill="#fff" clip-path="url(#cc55)"/>
<rect x="208" y="631" width="20" height="14" rx="2" fill="#4b5468"/>
<rect x="176" y="671" width="20" height="14" rx="2" fill="#485166"/>
</g></svg>
<span class="t" style="left:49.8px;top:591.9px;font-size:12.200px;color:#f0f0f0;transform:scaleX(0.767)">0.7</span>
<span class="t" style="left:87.2px;top:591.9px;font-size:12.200px;color:#f0f0f0;transform:scaleX(0.516)">1</span>
<span class="t" style="left:114.5px;top:591.9px;font-size:12.200px;color:#f0f0f0;transform:scaleX(0.767)">1.5</span>
<span class="t" style="left:151.0px;top:591.9px;font-size:12.200px;color:#f0f0f0;transform:scaleX(0.664)">2</span>
<span class="t" style="left:179.2px;top:591.9px;font-size:12.200px;color:#f0f0f0;transform:scaleX(0.767)">2.5</span>
<span class="t" style="left:215.5px;top:591.9px;font-size:12.200px;color:#f0f0f0;transform:scaleX(0.664)">3</span>
<span class="t" style="left:54.0px;top:631.9px;font-size:12.200px;color:#f0f0f0;transform:scaleX(0.664)">4</span>
<span class="t" style="left:86.8px;top:631.9px;font-size:12.200px;color:#f0f0f0;transform:scaleX(0.664)">5</span>
<span class="t" style="left:118.8px;top:631.9px;font-size:12.200px;color:#f0f0f0;transform:scaleX(0.664)">6</span>
<span class="t" style="left:151.0px;top:631.9px;font-size:12.200px;color:#f0f0f0;transform:scaleX(0.664)">7</span>
<span class="t" style="left:183.5px;top:631.9px;font-size:12.200px;color:#f0f0f0;transform:scaleX(0.664)">8</span>
<span class="t" style="left:212.7px;top:631.9px;font-size:12.200px;color:#f0f0f0;transform:scaleX(0.752)">10</span>
<span class="t" style="left:51.1px;top:671.9px;font-size:12.200px;color:#f0f0f0;transform:scaleX(0.752)">12</span>
<span class="t" style="left:83.9px;top:671.9px;font-size:12.200px;color:#f0f0f0;transform:scaleX(0.752)">15</span>
<span class="t" style="left:115.9px;top:671.9px;font-size:12.200px;color:#f0f0f0;transform:scaleX(0.752)">17</span>
<span class="t" style="left:148.2px;top:671.9px;font-size:12.200px;color:#f0f0f0;transform:scaleX(0.752)">20</span>
<span class="t" style="left:180.7px;top:671.9px;font-size:12.200px;color:#f0f0f0;transform:scaleX(0.752)">25</span>
<span class="t" style="left:212.7px;top:671.9px;font-size:12.200px;color:#f0f0f0;transform:scaleX(0.752)">30</span>
<span class="t" style="left:51.1px;top:711.9px;font-size:12.200px;color:#f0f0f0;transform:scaleX(0.752)">40</span>
<span class="t" style="left:83.9px;top:711.9px;font-size:12.200px;color:#f0f0f0;transform:scaleX(0.752)">50</span>
<span class="t" style="left:115.9px;top:711.9px;font-size:12.200px;color:#f0f0f0;transform:scaleX(0.752)">60</span>
<span class="t" style="left:148.2px;top:711.9px;font-size:12.200px;color:#f0f0f0;transform:scaleX(0.752)">70</span>
<span class="t" style="left:180.7px;top:711.9px;font-size:12.200px;color:#f0f0f0;transform:scaleX(0.752)">80</span>
<span class="t" style="left:209.8px;top:711.9px;font-size:12.200px;color:#f0f0f0;transform:scaleX(0.777)">100</span>
<span class="t" style="left:48.4px;top:751.9px;font-size:12.200px;color:#f0f0f0;transform:scaleX(0.777)">120</span>
<span class="t" style="left:81.1px;top:751.9px;font-size:12.200px;color:#f0f0f0;transform:scaleX(0.777)">150</span>
<span class="t" style="left:113.1px;top:751.9px;font-size:12.200px;color:#f0f0f0;transform:scaleX(0.777)">170</span>
<span class="t" style="left:145.3px;top:751.9px;font-size:12.200px;color:#f0f0f0;transform:scaleX(0.777)">200</span>
<span class="t" style="left:177.8px;top:751.9px;font-size:12.200px;color:#f0f0f0;transform:scaleX(0.777)">250</span>
<span class="t" style="left:209.8px;top:751.9px;font-size:12.200px;color:#f0f0f0;transform:scaleX(0.777)">300</span>
<div class="a sb" style="left:235px;top:567px;width:13px;height:209px;background:#404040"></div>
<div class="a sbb" style="left:235px;top:568px;width:12px;height:12px;"></div>
<div class="a sbt" style="left:236px;top:582px;width:10px;height:132px;"></div>
<div class="a sbb" style="left:235px;top:763px;width:12px;height:12px;"></div>
<svg style="left:235px;top:568px" width="12" height="208"><path d="M3.500 7.500 L6 5 L8.500 7.500 M3.500 199.500 L6 202 L8.500 199.500" stroke="#ddd" stroke-width="1.200" fill="none"/></svg>
<!-- colour wheel panel -->
<div class="a" style="left:41px;top:776px;width:207px;height:19px;background:#363636"></div>
<div class="a hd" style="left:41px;top:780px;width:18px;height:15px;"></div>
<div class="a tab" style="left:41px;top:795px;width:207px;height:152px;"></div>
<div class="a tab" style="left:59px;top:780px;width:28px;height:15px;"></div>
<div class="a" style="left:88px;top:781px;width:29px;height:13px;background:#484848;box-sizing:border-box;border:1px solid #585858;border-bottom:none"></div>
<div class="a" style="left:118px;top:781px;width:29px;height:13px;background:#484848;box-sizing:border-box;border:1px solid #585858;border-bottom:none"></div>
<div class="a" style="left:148px;top:781px;width:29px;height:13px;background:#484848;box-sizing:border-box;border:1px solid #585858;border-bottom:none"></div>
<div class="a" style="left:178px;top:781px;width:29px;height:13px;background:#484848;box-sizing:border-box;border:1px solid #585858;border-bottom:none"></div>
<div class="a" style="left:208px;top:781px;width:27px;height:13px;background:#484848;box-sizing:border-box;border:1px solid #585858;border-bottom:none"></div>
<svg style="left:41px;top:780px" width="207" height="20"><path d="M5 4.5H12M5 7.5H12M5 10.5H12" stroke="#8c8c8c" stroke-width="1"/>
<circle cx="32" cy="10.500" r="6.500" class="ic" stroke-width="1.100"/><rect x="29" y="7.500" width="6" height="6" rx="1" class="if"/>
<g opacity="0.450"><rect x="55.500" y="5.500" width="13" height="9" class="ic" stroke-width="1.100"/><rect x="57" y="7" width="4" height="3" class="if"/><rect x="61" y="10" width="3" height="3" class="ic" stroke-width="0.800"/>
<path d="M86 7.500H99M86 12.500H99" class="ic" stroke-width="1.300"/><path d="M90 9.500L92 7.500L94 9.500ZM90 14.500L92 12.500L94 14.500Z" class="if"/>
<path d="M113 14.500 C115 8 117 5 118.500 5 C120 6 120.500 8 121.500 9 C122.500 7 123 5 124.500 5 C126 6 128 10 129 14.500Z" class="if"/>
<rect x="145.500" y="5.500" width="14" height="9" class="ic" stroke-width="1.100"/><path d="M148.500 5.500V14.500M156.500 5.500V14.500" class="ic" stroke-width="1"/><rect x="150" y="7.500" width="5" height="5" class="if"/>
<rect x="176.500" y="7.500" width="12" height="7" class="ic" stroke-width="1.100"/><path d="M179 7 V5 H191 V12" class="ic" stroke-width="1.100"/></g>
<rect x="195.500" y="1.500" width="11" height="12" rx="1.500" fill="#555" stroke="#787878"/><path d="M198 6 L201 9 L204 6" stroke="#ddd" stroke-width="1.200" fill="none"/>
</svg>
<div class="a" style="left:50px;top:802px;width:188px;height:188px;border-radius:50%;background:conic-gradient(from -60deg,#f01414,#f0f014,#14eb14,#14ebeb,#1414eb,#eb14eb,#f01414);"></div>
<div class="a" style="left:66px;top:818px;width:156px;height:156px;border-radius:50%;background:#4d4d4d;"></div>
<div class="a" style="left:93px;top:845px;width:102px;height:102px;background:linear-gradient(to bottom,rgba(0,0,0,0),#000),linear-gradient(to right,#fff,#f00);"></div>
<svg style="left:0;top:780px" width="250" height="167"><g transform="translate(68.500,71.500) rotate(30)"><rect x="-7" y="-4" width="14" height="8" fill="#e00000" stroke="#fff" stroke-width="1.600"/></g><circle cx="106.500" cy="168" r="4" fill="none" stroke="#fff" stroke-width="1.300"/></svg>
<!-- right side -->
<div class="a" style="left:1065px;top:28px;width:151px;height:21px;background:#363636"></div>
<div class="a" style="left:1065px;top:49px;width:42px;height:898px;background:#363636"></div>
<svg style="left:1065px;top:28px" width="151" height="22"><g stroke="#8a8a8a" stroke-width="1.100" fill="none"><path d="M11 7 L8 11 L11 15"/><path d="M30 7 L33 11 L30 15 M35 7 L38 11 L35 15"/><path d="M45.500 4 V16 M47.700 4 V16 M49.900 4 V16" stroke-width="0.800" stroke="#777"/></g></svg>
<svg style="left:1065px;top:49px" width="42" height="400">
<rect x="5" y="2" width="32" height="30" fill="#4d4d4d"/>
<g transform="translate(0,0)"><circle cx="21" cy="18" r="8.500" class="ic" stroke-width="1.600"/><path d="M19 16 L28.500 25.500" class="ic" stroke-width="2"/><path d="M16 13 H23.500 L16 20.500 Z" class="if"/></g>
<rect x="5" y="38" width="32" height="30" fill="#4d4d4d"/>
<path d="M12.500 48.5 V45.5 H18.500 L20 47.5" class="ic" stroke-width="1.100"/><rect x="12.500" y="47.5" width="17" height="13" rx="1" class="ic" stroke-width="1.200"/><path d="M16 50 L26 57 M26 50 L16 57" stroke="#b4b4b4" stroke-width="2.4" stroke-linecap="round" fill="none"/>
<rect x="5" y="74" width="32" height="30" fill="#4d4d4d"/>
<path d="M12.500 84.5 V81.5 H18.500 L20 83.5" class="ic" stroke-width="1.100"/><rect x="12.500" y="83.5" width="17" height="13" rx="1" class="ic" stroke-width="1.200"/><rect x="16.500" y="86.5" width="9" height="7" fill="#888" stroke="#b4b4b4" stroke-width="0.800"/><path d="M19.500 93.5 V91 C19.500 89 22.500 89 22.500 91 V93.5" fill="#4d4d4d" stroke="#b4b4b4" stroke-width="0.800"/>
<rect x="5" y="110" width="32" height="30" fill="#4d4d4d"/>
<path d="M12.500 120.5 V117.5 H18.500 L20 119.5" class="ic" stroke-width="1.100"/><rect x="12.500" y="119.5" width="17" height="13" rx="1" class="ic" stroke-width="1.200"/><path d="M16 122 L26 129 M26 122 L16 129" stroke="#b4b4b4" stroke-width="2.8" stroke-linecap="round" fill="none"/>
<rect x="5" y="146" width="32" height="30" fill="#4d4d4d"/>
<path d="M12.500 156.5 V153.5 H18.500 L20 155.5" class="ic" stroke-width="1.100"/><rect x="12.500" y="155.5" width="17" height="13" rx="1" class="ic" stroke-width="1.200"/><rect x="16.500" y="158.5" width="9" height="7" fill="#999"/><path d="M17 159L25 165M25 159L17 165M21 158.5V165.5M16.500 162H25.500" stroke="#4d4d4d" stroke-width="0.700"/>
<rect x="5" y="182" width="32" height="30" fill="#4d4d4d"/>
<path d="M12.500 192.5 V189.5 H18.500 L20 191.5" class="ic" stroke-width="1.100"/><rect x="12.500" y="191.5" width="17" height="13" rx="1" class="ic" stroke-width="1.200"/><rect x="16.500" y="194.5" width="9" height="7" class="ic" stroke-width="0.900"/><path d="M16.500 197H25.500M20.500 197V201.5" class="ic" stroke-width="0.900"/>
<rect x="5" y="218" width="32" height="30" fill="#4d4d4d"/>
<path d="M12.500 228.5 V225.5 H18.500 L20 227.5" class="ic" stroke-width="1.100"/><rect x="12.500" y="227.5" width="17" height="13" rx="1" class="ic" stroke-width="1.200"/><path d="M17 231L19.500 233M25 231L22.500 233M17 237L19.500 235M25 237L22.500 235" stroke="#b4b4b4" stroke-width="1.300"/>
<rect x="5" y="254" width="32" height="30" fill="#4d4d4d"/>
<path d="M12.500 264.5 V261.5 H18.500 L20 263.5" class="ic" stroke-width="1.100"/><rect x="12.500" y="263.5" width="17" height="13" rx="1" class="ic" stroke-width="1.200"/><rect x="16.500" y="266.5" width="9" height="7" class="ic" stroke-width="0.900"/><path d="M17 273L20 269.5L22 271.5L23.500 270L25 273Z" class="if"/>
<rect x="5" y="290" width="32" height="30" fill="#4d4d4d"/>
<path d="M12.500 300.5 V297.5 H18.500 L20 299.5" class="ic" stroke-width="1.100"/><rect x="12.500" y="299.5" width="17" height="13" rx="1" class="ic" stroke-width="1.200"/><rect x="16.500" y="303.5" width="7" height="6" class="ic" stroke-width="0.900"/><path d="M20 307L26 301.5" stroke="#b4b4b4" stroke-width="1.400"/>
<rect x="5" y="326" width="32" height="30" fill="#4d4d4d"/>
<path d="M12.500 336.5 V333.5 H18.500 L20 335.5" class="ic" stroke-width="1.100"/><rect x="12.500" y="335.5" width="17" height="13" rx="1" class="ic" stroke-width="1.200"/><path d="M21 338L25 340V344L21 346L17 344V340ZM17 340L21 342L25 340M21 342V346" class="ic" stroke-width="0.900"/>
<rect x="5" y="362" width="32" height="30" fill="#4d4d4d"/>
<path d="M12.500 372.5 V369.5 H18.500 L20 371.5" class="ic" stroke-width="1.100"/><rect x="12.500" y="371.5" width="17" height="13" rx="1" class="ic" stroke-width="1.200"/><circle cx="21" cy="374.5" r="1.300" class="if"/><path d="M17 376.5H25M21 376.5V379M21 379L18.500 382.5M21 379L23.500 382.5" stroke="#b4b4b4" stroke-width="1.400" fill="none"/>
</svg>
<div class="a" style="left:1107px;top:49px;width:109px;height:17px;background:#3a3a3a"></div>
<div class="a tab" style="left:1126px;top:52px;width:72px;height:14px;"></div>
<div class="a" style="left:1199px;top:52px;width:17px;height:13px;background:#454545;box-sizing:border-box;border:1px solid #555;border-bottom:none"></div>
<div class="a tab" style="left:1107px;top:66px;width:109px;height:214px;"></div>
<div class="a" style="left:1107px;top:72px;width:10px;height:163px;background:#2e2e2e"></div>
<div class="a" style="left:1117px;top:72px;width:1.500px;height:163px;background:#e00000"></div>
<div class="a" style="left:1118.500px;top:72px;width:97.500px;height:163px;background:#fff"></div>
<svg style="left:1107px;top:49px" width="109" height="20"><path d="M6 6.5H13M6 9.5H13M6 12.5H13" stroke="#8c8c8c" stroke-width="1"/><rect x="26.500" y="9.500" width="11" height="8" rx="1" class="ic" stroke-width="1"/><rect x="29.500" y="6.500" width="11" height="8" rx="1" fill="#888" stroke="#b4b4b4" stroke-width="1"/><path d="M98.500 6 V14 H108" class="ic" stroke-width="1" opacity="0.600"/><path d="M100 14 L103 11 L105 13 L108 10 V14Z" fill="#777"/></svg>
<span class="t" style="left:1154.500px;top:55.100px;font-size:9.500px;color:#d0d0d0;transform:scaleX(0.710)">ナビゲーター</span>
<svg style="left:0;top:0" width="1216" height="947"><defs><clipPath id="navclip"><rect x="1119" y="72" width="97" height="163"/></clipPath></defs><g clip-path="url(#navclip)"><g transform="translate(1119,235) scale(0.270) translate(-257,-802)"><use href="#art" style="stroke-width:3px"/></g></g></svg>
<svg style="left:1107px;top:236px" width="109" height="44"><rect x="5.500" y="7.500" width="84" height="11" fill="#4d4d4d" stroke="#727272"/><path d="M6.500 18 L88.500 8.300 V18Z" fill="#333"/><rect x="45.300" y="3.300" width="3.500" height="19.300" rx="0.800" fill="#6e6e6e" stroke="#858585" stroke-width="0.600"/>
<rect x="5.500" y="27.500" width="84" height="11" fill="#4d4d4d" stroke="#727272"/><path d="M6.500 28.500 C12 33 17 37 23 38 H6.500Z M39 38 C46 36 52 28.500 60 28.500 H72 C78 28.500 83 34 88.500 37.500 V38Z" fill="#333"/><rect x="46.200" y="23.600" width="3.600" height="19" rx="0.800" fill="#6e6e6e" stroke="#858585" stroke-width="0.600"/></svg>
<div class="a" style="left:1107px;top:280px;width:109px;height:23px;background:#363636"></div>
<div class="a hd" style="left:1107px;top:284px;width:19px;height:14px;"></div>
<div class="a tab" style="left:1126px;top:284px;width:90px;height:19px;"></div>
<div class="a tab" style="left:1107px;top:298px;width:109px;height:5px;"></div>
<div class="a" style="left:1107px;top:303px;width:109px;height:210px;background:#404040"></div>
<svg style="left:1107px;top:284px" width="109" height="20"><path d="M6 3.5H13M6 6.5H13M6 9.5H13" stroke="#8c8c8c" stroke-width="1"/><g class="ic" stroke-width="1"><path d="M32.500 2.500 L39.500 6 L32.500 9.500 L26 6Z"/><path d="M26 9.500 L32.500 13 L34.500 12 M26 13 L32.500 16.500 L34 15.700"/></g><g fill="#b4b4b4"><circle cx="36.500" cy="12.300" r="1.300"/><circle cx="40.300" cy="12.300" r="1.300"/><path d="M35.300 15.200 L37.700 17.600 M37.700 15.200 L35.300 17.600" stroke="#b4b4b4" stroke-width="0.800"/><rect x="39.200" y="15.200" width="2.300" height="2.300" fill="none" stroke="#b4b4b4" stroke-width="0.800"/></g></svg>
<span class="t" style="left:1154px;top:287.600px;font-size:9.500px;color:#d0d0d0;transform:scaleX(0.737)">レイヤープロパティ</span>
<span class="t" style="left:1116.500px;top:305.800px;font-size:12px;color:#ececec;transform:scaleX(0.999)">効果</span>
<span class="t" style="left:1116.500px;top:343.500px;font-size:12px;color:#ececec;transform:scaleX(0.986)">表現色</span>
<svg style="left:1107px;top:303px" width="109" height="80"><path d="M5 9.500H8M35 9.500H109M5 46.500H8M47 46.500H109" stroke="#6a6a6a" stroke-width="1"/><rect x="17.500" y="57.500" width="95" height="19" rx="2" fill="#555" stroke="#686868"/><circle cx="73" cy="64" r="4.500" fill="#d9534f"/><circle cx="69.500" cy="69.500" r="4.500" fill="#5cb85c"/><circle cx="76.500" cy="69.500" r="4.500" fill="#428bca"/><circle cx="73" cy="67.500" r="1.800" fill="#eee"/></svg>
<span class="t" style="left:1191px;top:363.800px;font-size:12px;color:#ececec;transform:scaleX(0.722)">カラー</span>
<div class="a" style="left:1107px;top:513px;width:109px;height:21px;background:#363636"></div>
<div class="a hd" style="left:1107px;top:516px;width:19px;height:14px;"></div>
<div class="a tab" style="left:1126px;top:516px;width:59px;height:18px;"></div>
<div class="a" style="left:1186px;top:516px;width:30px;height:14px;background:#454545;box-sizing:border-box;border:1px solid #555;border-bottom:none"></div>
<div class="a tab" style="left:1107px;top:530px;width:109px;height:73px;"></div>
<div class="a" style="left:1107px;top:603px;width:109px;height:344px;background:#404040"></div>
<svg style="left:1107px;top:516px" width="109" height="20"><path d="M6 3.5H13M6 6.5H13M6 9.5H13" stroke="#8c8c8c" stroke-width="1"/><g class="ic" stroke-width="1.100"><path d="M33 2.500 L40 6 L33 9.500 L26 6Z"/><path d="M26 9.500 L33 13 L40 9.500M26 13 L33 16.500 L40 13"/></g><g opacity="0.500" class="ic" stroke-width="1.100"><path d="M88 5 H97 C103 5 103 12.500 97 12.500 H88 M91 2 L88 5 L91 8"/></g></svg>
<span class="t" style="left:1154px;top:519px;font-size:9.500px;color:#d0d0d0;transform:scaleX(0.716)">レイヤー</span>
<svg style="left:1107px;top:534px" width="109" height="70"><rect x="1.500" y="1.500" width="37" height="19" rx="2" fill="#5a5a5a" stroke="#707070"/><rect x="5.500" y="4.500" width="14" height="13" rx="2.500" class="ic" stroke-width="1.200"/><path d="M26.500 9 L30.500 13 L34.500 9" class="ic" stroke-width="1.200"/><rect x="43.500" y="1.500" width="70" height="19" rx="2" fill="#5a5a5a" stroke="#707070"/>
<rect x="33.500" y="29" width="10" height="9.500" rx="1.500" fill="#777"/><rect x="36" y="27" width="8.500" height="9" rx="1" fill="#b4b4b4"/><rect x="36.500" y="25.500" width="10.500" height="10.500" rx="1.500" class="ic" stroke-width="1" stroke-dasharray="2.500 1.300"/>
<g class="if"><path d="M58.700 31 L61.300 31 L63.300 39.500 L56.700 39.500Z"/><rect x="58" y="27" width="4" height="3.500"/></g><path d="M53.500 25.500 L58 28 M53.500 29 H57.500 M53.500 32 L58 30 M66.500 25.500 L62 28 M66.500 29 H62.500 M66.500 32 L62 30" stroke="#b4b4b4" stroke-width="0.900" fill="none"/>
<g class="ic" stroke-width="1"><path d="M75 25.500 H82 V33 L78.500 37 L75 33Z"/><path d="M76.500 27 L78.500 30 L80.500 27 V32 H76.500Z" class="if"/><path d="M79 38.500 C82 39.500 85 37.500 85 35 M83.500 36.500 L85 35 L86.500 36.500"/></g>
<g><rect x="94.500" y="30.500" width="11" height="8" rx="1" class="if"/><path d="M96.500 30.500 V28 C96.500 24 103.500 24 103.500 28 V30.500" class="ic" stroke-width="1.300"/></g>
<g transform="translate(0,1)"><g class="ic" stroke-width="1"><rect x="3.500" y="48.500" width="13" height="5.500" rx="0.500"/><rect x="3.500" y="55" width="13" height="5.500" rx="0.500"/><path d="M5.500 51H7M5.500 57.500H7"/></g>
<g class="ic" stroke-width="1.100"><path d="M83.500 47.500 H96.500 V55 M90 60.500 H86.500 L83.500 57.500 V47.500 M83.500 57.500 H86.500 V60.500"/><circle cx="96" cy="59" r="3.300" fill="#4d4d4d"/><path d="M94 59H98M96 57V61"/><rect x="103.500" y="47.500" width="10" height="13" rx="1"/><circle cx="109" cy="54" r="3"/></g></g>
</svg>
<span class="t" style="left:1169px;top:538.500px;font-size:12px;color:#ececec;transform:scaleX(0.999)">通常</span>
<div class="a" style="left:1107px;top:602px;width:109px;height:67px;background:#2c2c2c"></div>
<div class="a" style="left:1108px;top:603px;width:19px;height:32px;background:#404040"></div>
<div class="a" style="left:1128px;top:603px;width:17px;height:32px;background:#404040"></div>
<div class="a" style="left:1146px;top:603px;width:70px;height:32px;background:#5f6b84"></div>
<div class="a" style="left:1108px;top:636px;width:19px;height:32px;background:#404040"></div>
<div class="a" style="left:1128px;top:636px;width:17px;height:32px;background:#404040"></div>
<div class="a" style="left:1146px;top:636px;width:70px;height:32px;background:#404040"></div>
<svg style="left:1107px;top:603px" width="109" height="68"><defs><pattern id="ck2" width="8" height="8" patternUnits="userSpaceOnUse"><rect width="8" height="8" fill="#fff"/><rect width="4" height="4" fill="#ccc"/><rect x="4" y="4" width="4" height="4" fill="#ccc"/></pattern></defs>
<path d="M3.200 17.5 C6 9.0 14.500 9.0 17.300 17.5" fill="none" stroke="#b4b4b4" stroke-width="1.600" stroke-linecap="round"/><circle cx="10.200" cy="15.9" r="3.300" class="if"/>
<path d="M3.200 49.7 C6 41.2 14.500 41.2 17.300 49.7" fill="none" stroke="#b4b4b4" stroke-width="1.600" stroke-linecap="round"/><circle cx="10.200" cy="48.1" r="3.300" class="if"/>
<path d="M23 23.500 L25 18 L33 9.500 L35.500 12 L27 20.500 Z" class="if"/><path d="M22 25.500 H35" class="ic" stroke-width="1.100"/>
<rect x="24.500" y="43.500" width="10" height="10" rx="1.500" fill="#3a3a3a" stroke="#555"/>
<rect x="43.500" y="1.500" width="37.500" height="29" fill="url(#ck2)" stroke="#fff" stroke-width="1"/><rect x="45" y="3" width="34.500" height="26" fill="none" stroke="#1c1c1c" stroke-width="1.600"/>
<rect x="45.500" y="36.700" width="33" height="24.500" fill="#fff" stroke="#2a2a2a" stroke-width="1"/>
<rect x="91.500" y="37.500" width="20" height="16" fill="#fff" stroke="#1c1c1c"/><path d="M95.500 40.500 H104.500 V50.500 H98 L95.500 48 Z M95.500 48 H98 V50.500" fill="none" stroke="#000" stroke-width="1.200"/>
</svg>
<span class="t" style="left:1195.500px;top:604.300px;font-size:12.300px;color:#ececec;transform:scaleX(0.779)">100</span>
<span class="t" style="left:1195px;top:619px;font-size:12px;color:#ececec;transform:scaleX(0.673)">レイヤ</span>
</body></html>
